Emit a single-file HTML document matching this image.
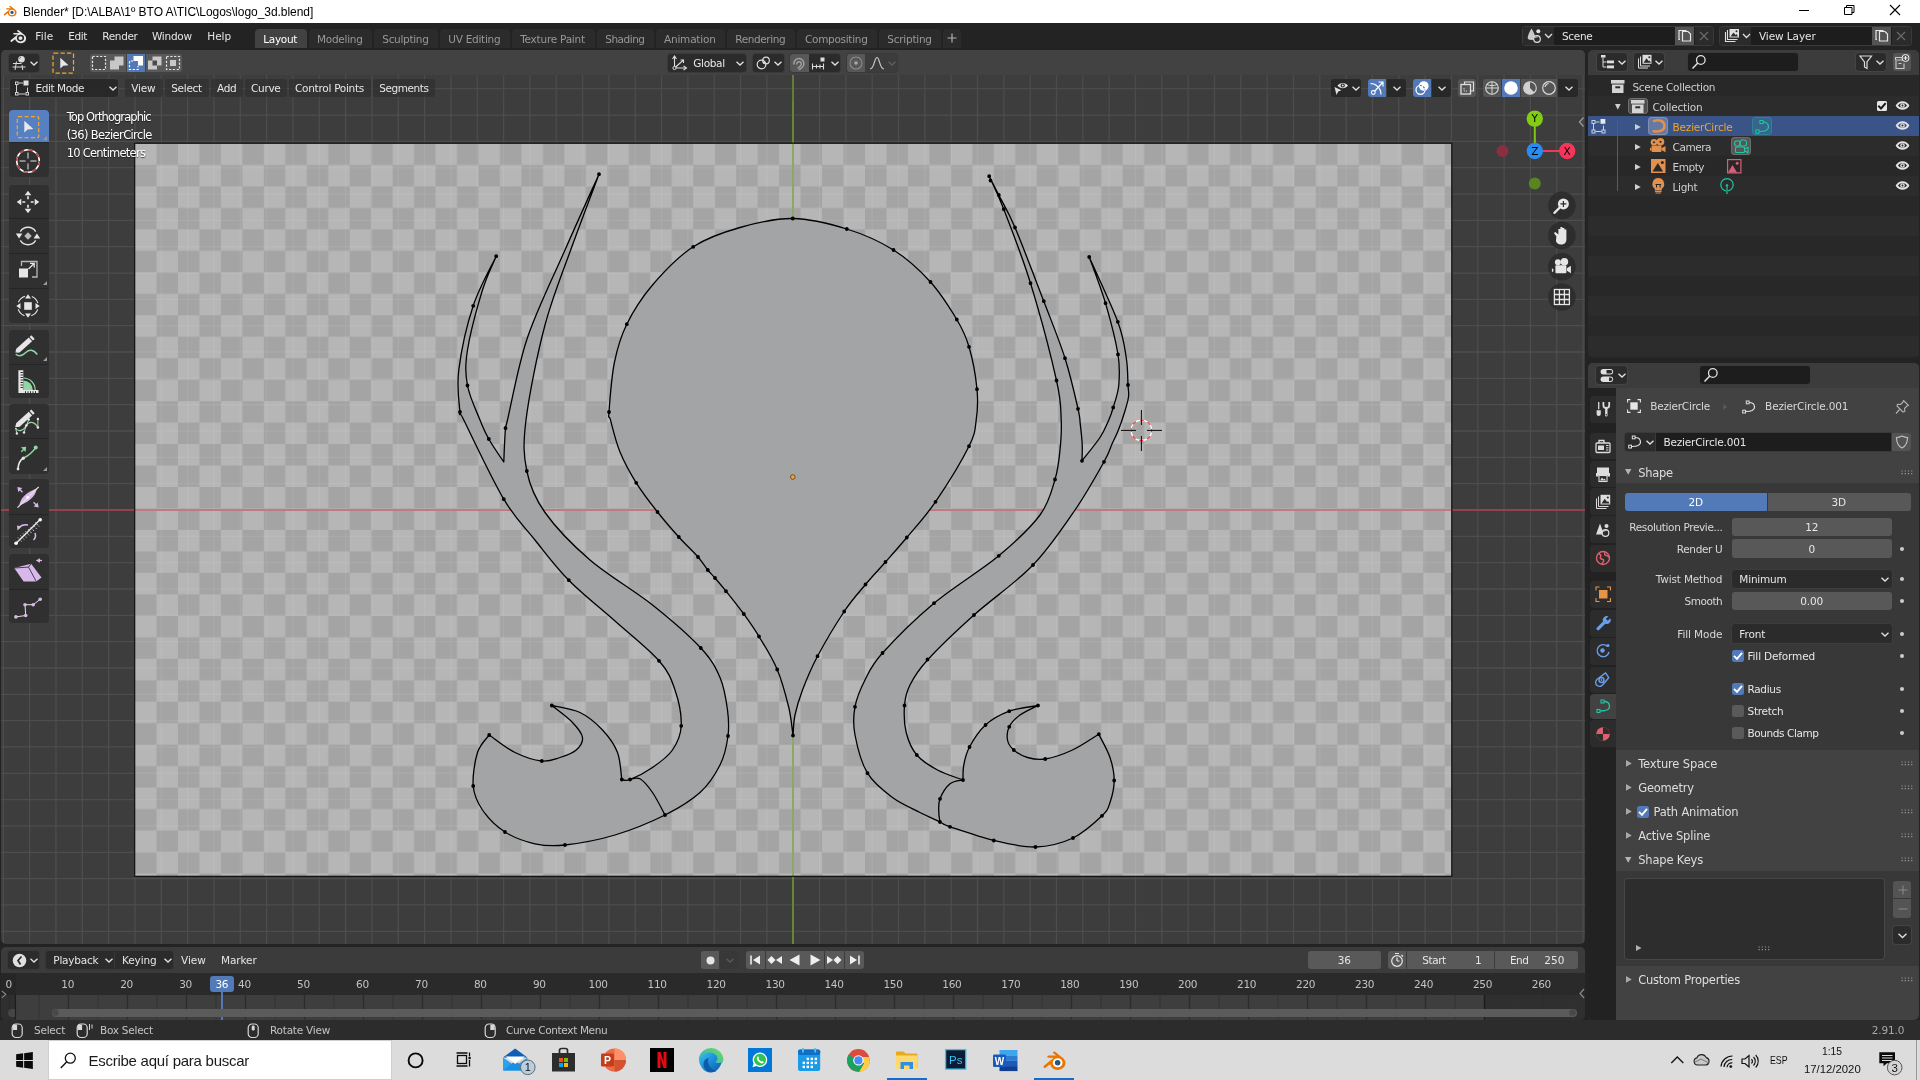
<!DOCTYPE html>
<html><head><meta charset="utf-8"><title>Blender</title>
<style>
html,body{margin:0;padding:0}
body{width:1920px;height:1080px;position:relative;overflow:hidden;background:#232323;font-family:"DejaVu Sans","Liberation Sans",sans-serif;font-size:11px;color:#e0e0e0;-webkit-font-smoothing:antialiased}
.a{position:absolute}
.t{position:absolute;white-space:nowrap;line-height:14px;letter-spacing:-0.35px}
body>div{will-change:transform}
.win{font-family:"Liberation Sans",sans-serif;letter-spacing:0}
.btn{position:absolute;background:#2b2b2b;border-radius:3px;box-shadow:0 0 0 1px #3a3a3a}
.hbtn{position:absolute;background:rgba(40,40,40,.55);border-radius:3px;height:18px;top:3px}
.tab{position:absolute;top:6px;height:19px;background:#2b2b2b;border-radius:4px 4px 0 0;color:#9a9a9a;text-align:center;line-height:20px;font-size:12px;letter-spacing:-0.3px}
.tab.on{background:#424242;color:#fff}
svg{position:absolute;overflow:visible}
.sh{text-shadow:0 1px 1px rgba(0,0,0,.6)}
</style></head>
<body>

<div class="a" style="left:0;top:0;width:1920px;height:23px;background:#fff"></div>
<svg style="left:3.3px;top:4.6px" width="14" height="13" viewBox="0 0 17 16">
 <path d="M1.2 11.2 L8.2 5.6 L4.6 5.6 Q3.6 5.6 3.6 4.8 Q3.6 4 4.6 4 L9.9 4 L7.9 2.4 Q7.3 1.7 7.9 1.2 Q8.5 .8 9.2 1.3 L15 5.9 Q16.9 7.6 16.6 9.9 Q16 13.6 11.6 14.2 Q7.8 14.4 6.2 11.6 L5.6 10.2 L2.4 12.7 Q1.6 13.2 1.1 12.5 Q.7 11.8 1.2 11.2Z" fill="#ea7600"/>
 <ellipse cx="11" cy="9.1" rx="3.5" ry="3.2" fill="#fff"/>
 <ellipse cx="11" cy="9.1" rx="2" ry="1.9" fill="#265787"/>
</svg>
<div class="t win" style="left:23px;top:4.8px;font-size:12px;color:#000;line-height:15px;letter-spacing:-0.04px">Blender* [D:\ALBA\1º BTO A\TIC\Logos\logo_3d.blend]</div>
<svg style="left:1780px;top:0" width="140" height="23" viewBox="0 0 140 23">
 <path d="M19 10.5h10" stroke="#000" stroke-width="1" fill="none"/>
 <path d="M64.5 7.500h7.500v7h-7.500z M66.500 7.500v-2h7.500v7h-2.500" stroke="#000" stroke-width="1" fill="none"/>
 <path d="M110 5l10 10M120 5l-10 10" stroke="#000" stroke-width="1.100" fill="none"/>
</svg>


<div class="a" style="left:0;top:23px;width:1920px;height:27px;background:#232323;font-size:12px">
<svg style="left:9px;top:6px" width="18" height="16" viewBox="0 0 17 16">
 <path d="M1.2 11.2 L8.2 5.6 L4.6 5.6 Q3.6 5.6 3.6 4.8 Q3.6 4 4.6 4 L9.9 4 L7.9 2.4 Q7.3 1.7 7.9 1.2 Q8.5 .8 9.2 1.3 L15 5.9 Q16.9 7.6 16.6 9.9 Q16 13.6 11.6 14.2 Q7.8 14.4 6.2 11.6 L5.6 10.2 L2.4 12.7 Q1.6 13.2 1.1 12.5 Q.7 11.8 1.2 11.2Z" fill="#e6e6e6"/>
 <ellipse cx="11" cy="9.1" rx="3.6" ry="3.3" fill="#232323"/>
 <ellipse cx="11" cy="9.1" rx="2" ry="1.9" fill="#e6e6e6"/>
</svg>
<div class="t" style="top:6.3px;font-size:10.5px;letter-spacing:0.11px;line-height:14px;left:35.3px;color:#e4e4e4;">File</div><div class="t" style="top:6.3px;font-size:10.5px;letter-spacing:-0.41px;line-height:14px;left:68.3px;color:#e4e4e4;">Edit</div><div class="t" style="top:6.3px;font-size:10.5px;letter-spacing:-0.36px;line-height:14px;left:102.3px;color:#e4e4e4;">Render</div><div class="t" style="top:6.3px;font-size:10.5px;letter-spacing:-0.28px;line-height:14px;left:152.0px;color:#e4e4e4;">Window</div><div class="t" style="top:6.3px;font-size:10.5px;letter-spacing:-0.06px;line-height:14px;left:207.3px;color:#e4e4e4;">Help</div>
<div class="tab on" style="left:255px;width:52px"></div><div class="t" style="top:9.2px;font-size:10.5px;letter-spacing:-0.33px;line-height:14px;left:263.3px;color:#fff;">Layout</div><div class="tab" style="left:309px;width:63px"></div><div class="t" style="top:9.2px;font-size:10.5px;letter-spacing:-0.28px;line-height:14px;left:317.0px;color:#989898;">Modeling</div><div class="tab" style="left:374px;width:64px"></div><div class="t" style="top:9.2px;font-size:10.5px;letter-spacing:-0.31px;line-height:14px;left:382.3px;color:#989898;">Sculpting</div><div class="tab" style="left:440px;width:70px"></div><div class="t" style="top:9.2px;font-size:10.5px;letter-spacing:-0.27px;line-height:14px;left:448.3px;color:#989898;">UV Editing</div><div class="tab" style="left:512px;width:83px"></div><div class="t" style="top:9.2px;font-size:10.5px;letter-spacing:-0.24px;line-height:14px;left:520.2px;color:#989898;">Texture Paint</div><div class="tab" style="left:597px;width:57px"></div><div class="t" style="top:9.2px;font-size:10.5px;letter-spacing:-0.47px;line-height:14px;left:605.2px;color:#989898;">Shading</div><div class="tab" style="left:656px;width:69px"></div><div class="t" style="top:9.2px;font-size:10.5px;letter-spacing:-0.21px;line-height:14px;left:664.0px;color:#989898;">Animation</div><div class="tab" style="left:727px;width:68px"></div><div class="t" style="top:9.2px;font-size:10.5px;letter-spacing:-0.38px;line-height:14px;left:735.2px;color:#989898;">Rendering</div><div class="tab" style="left:797px;width:80px"></div><div class="t" style="top:9.2px;font-size:10.5px;letter-spacing:-0.30px;line-height:14px;left:805.0px;color:#989898;">Compositing</div><div class="tab" style="left:879px;width:62px"></div><div class="t" style="top:9.2px;font-size:10.5px;letter-spacing:-0.25px;line-height:14px;left:887.3px;color:#989898;">Scripting</div><div class="tab" style="left:943px;width:18px"></div><svg style="left:947px;top:10px" width="10" height="10"><path d="M5 .5v9M.5 5h9" stroke="#b0b0b0" stroke-width="1.2"/></svg>
<!-- scene selector -->
<div class="a" style="left:1523px;top:4px;width:190px;height:18px;background:#1d1d1d;border-radius:3px;box-shadow:0 0 0 1px #3a3a3a"></div>
<div class="a" style="left:1523px;top:4px;width:31px;height:18px;background:#2b2b2b;border-radius:3px 0 0 3px"></div>
<div class="a" style="left:1675px;top:4px;width:19px;height:18px;background:#545454"></div>
<div class="a" style="left:1695px;top:4px;width:18px;height:18px;background:#2b2b2b;border-radius:0 3px 3px 0"></div>
<svg style="left:1526px;top:5px" width="30" height="16" viewBox="0 0 30 16">
 <path d="M5.500 .5c2 3.500 3.800 7 3.800 9.300c0 1.500-1.500 2.200-3.800 2.200s-3.800-.7-3.800-2.200c0-2.300 1.800-5.800 3.800-9.300z" fill="#c8c8c8"/><circle cx="12.300" cy="3.200" r="2" fill="#e0e0e0"/><circle cx="11" cy="11" r="3.300" fill="#2b2b2b" stroke="#e0e0e0" stroke-width="1.200"/><path d="M9.300 10a2 2 0 0 1 2.500-1" stroke="#e0e0e0" stroke-width=".9" fill="none"/>
 <g transform="translate(19,6)"><path d="M0 0l3.5 3.5L7 0" fill="none" stroke="#e0e0e0" stroke-width="1.3"/></g></svg>
<div class="t" style="top:6.0px;font-size:10.5px;letter-spacing:-0.30px;line-height:14px;left:1562.0px;color:#e4e4e4;">Scene</div>
<svg style="left:1677px;top:5px" width="16" height="16" viewBox="0 0 16 16"><path d="M5.5 3.5h5.5l2.500 2.500v7h-8z M3 11.500h-1v-9h7v1" fill="none" stroke="#e6e6e6" stroke-width="1.2"/></svg>
<svg style="left:1699px;top:8px" width="10" height="10"><path d="M1 1l8 8M9 1l-8 8" stroke="#6a6a6a" stroke-width="1.2"/></svg>
<!-- view layer -->
<div class="a" style="left:1720px;top:4px;width:191px;height:18px;background:#1d1d1d;border-radius:3px;box-shadow:0 0 0 1px #3a3a3a"></div>
<div class="a" style="left:1720px;top:4px;width:31px;height:18px;background:#2b2b2b;border-radius:3px 0 0 3px"></div>
<div class="a" style="left:1872px;top:4px;width:19px;height:18px;background:#545454"></div>
<div class="a" style="left:1892px;top:4px;width:19px;height:18px;background:#2b2b2b;border-radius:0 3px 3px 0"></div>
<svg style="left:1724px;top:5px" width="30" height="16" viewBox="0 0 30 16">
 <path d="M1.500 4v9.500h10" fill="none" stroke="#e0e0e0" stroke-width="1.1"/><path d="M3.500 2v9.500h10" fill="none" stroke="#e0e0e0" stroke-width="1.1"/>
 <rect x="5.500" y="1" width="9.500" height="8.500" fill="#e0e0e0"/><path d="M6.500 8.500l3-4 2 2.500 1-1 1.500 2.500z" fill="#2b2b2b"/><circle cx="12.500" cy="3.300" r="1" fill="#2b2b2b"/>
 <g transform="translate(19,6)"><path d="M0 0l3.5 3.5L7 0" fill="none" stroke="#e0e0e0" stroke-width="1.3"/></g></svg>
<div class="t" style="top:6.0px;font-size:10.5px;letter-spacing:-0.09px;line-height:14px;left:1759.0px;color:#e4e4e4;">View Layer</div>
<svg style="left:1874px;top:5px" width="16" height="16" viewBox="0 0 16 16"><path d="M5.5 3.5h5.5l2.500 2.500v7h-8z M3 11.500h-1v-9h7v1" fill="none" stroke="#e6e6e6" stroke-width="1.2"/></svg>
<svg style="left:1896px;top:8px" width="10" height="10"><path d="M1 1l8 8M9 1l-8 8" stroke="#6a6a6a" stroke-width="1.2"/></svg>
</div>

<div class="a" id="view3d" style="left:1px;top:50px;width:1584px;height:894px;border-radius:5px;overflow:hidden;background:#3d3d3d">
<svg style="left:-1px;top:-50px" width="1586" height="944" viewBox="0 0 1586 944">
<defs><pattern id="ck" x="135.00" y="143.50" width="42.94" height="42.94" patternUnits="userSpaceOnUse"><rect width="42.94" height="42.94" fill="#a4a4a4"/><rect width="21.47" height="21.47" fill="#b6b6b6"/><rect x="21.47" y="21.47" width="21.47" height="21.47" fill="#b6b6b6"/></pattern>
<clipPath id="imgclip"><rect x="135.0" y="143.5" width="1316.5" height="732.5"/></clipPath></defs>
<path d="M3.30 50V944M29.63 50V944M55.96 50V944M82.29 50V944M108.62 50V944M134.95 50V944M161.28 50V944M187.61 50V944M213.94 50V944M240.27 50V944M266.60 50V944M292.93 50V944M319.26 50V944M345.59 50V944M371.92 50V944M398.25 50V944M424.58 50V944M450.91 50V944M477.24 50V944M503.57 50V944M529.90 50V944M556.23 50V944M582.56 50V944M608.89 50V944M635.22 50V944M661.55 50V944M687.88 50V944M714.21 50V944M740.54 50V944M766.87 50V944M819.53 50V944M845.86 50V944M872.19 50V944M898.52 50V944M924.85 50V944M951.18 50V944M977.51 50V944M1003.84 50V944M1030.17 50V944M1056.50 50V944M1082.83 50V944M1109.16 50V944M1135.49 50V944M1161.82 50V944M1188.15 50V944M1214.48 50V944M1240.81 50V944M1267.14 50V944M1293.47 50V944M1319.80 50V944M1346.13 50V944M1372.46 50V944M1398.79 50V944M1425.12 50V944M1451.45 50V944M1477.78 50V944M1504.11 50V944M1530.44 50V944M1556.77 50V944M1583.10 50V944M0 88.72H1586M0 115.05H1586M0 141.38H1586M0 167.71H1586M0 194.04H1586M0 220.37H1586M0 246.70H1586M0 273.03H1586M0 299.36H1586M0 325.69H1586M0 352.02H1586M0 378.35H1586M0 404.68H1586M0 431.01H1586M0 457.34H1586M0 483.67H1586M0 536.33H1586M0 562.66H1586M0 588.99H1586M0 615.32H1586M0 641.65H1586M0 667.98H1586M0 694.31H1586M0 720.64H1586M0 746.97H1586M0 773.30H1586M0 799.63H1586M0 825.96H1586M0 852.29H1586M0 878.62H1586M0 904.95H1586M0 931.28H1586" stroke="#4d4d4d" stroke-width="1.3" fill="none"/>
<path d="M0 510.0H1586" stroke="#96414f" stroke-width="2"/>
<path d="M793.0 75V944" stroke="#648832" stroke-width="2"/>
<rect x="135.0" y="143.5" width="1316.5" height="732.5" fill="url(#ck)"/>
<g clip-path="url(#imgclip)"><path d="M3.30 50V944M29.63 50V944M55.96 50V944M82.29 50V944M108.62 50V944M134.95 50V944M161.28 50V944M187.61 50V944M213.94 50V944M240.27 50V944M266.60 50V944M292.93 50V944M319.26 50V944M345.59 50V944M371.92 50V944M398.25 50V944M424.58 50V944M450.91 50V944M477.24 50V944M503.57 50V944M529.90 50V944M556.23 50V944M582.56 50V944M608.89 50V944M635.22 50V944M661.55 50V944M687.88 50V944M714.21 50V944M740.54 50V944M766.87 50V944M819.53 50V944M845.86 50V944M872.19 50V944M898.52 50V944M924.85 50V944M951.18 50V944M977.51 50V944M1003.84 50V944M1030.17 50V944M1056.50 50V944M1082.83 50V944M1109.16 50V944M1135.49 50V944M1161.82 50V944M1188.15 50V944M1214.48 50V944M1240.81 50V944M1267.14 50V944M1293.47 50V944M1319.80 50V944M1346.13 50V944M1372.46 50V944M1398.79 50V944M1425.12 50V944M1451.45 50V944M1477.78 50V944M1504.11 50V944M1530.44 50V944M1556.77 50V944M1583.10 50V944M0 88.72H1586M0 115.05H1586M0 141.38H1586M0 167.71H1586M0 194.04H1586M0 220.37H1586M0 246.70H1586M0 273.03H1586M0 299.36H1586M0 325.69H1586M0 352.02H1586M0 378.35H1586M0 404.68H1586M0 431.01H1586M0 457.34H1586M0 483.67H1586M0 536.33H1586M0 562.66H1586M0 588.99H1586M0 615.32H1586M0 641.65H1586M0 667.98H1586M0 694.31H1586M0 720.64H1586M0 746.97H1586M0 773.30H1586M0 799.63H1586M0 825.96H1586M0 852.29H1586M0 878.62H1586M0 904.95H1586M0 931.28H1586" stroke="rgba(255,255,255,.07)" stroke-width="1.4" fill="none"/>
<path d="M0 510.0H1586" stroke="#c07a82" stroke-width="2"/>
<path d="M793.0 75V944" stroke="#8aa866" stroke-width="2"/></g>
<rect x="134.7" y="143.2" width="1317.1" height="733.1" fill="none" stroke="#111" stroke-width="1.2"/>
<g fill="#a3a4a6" stroke="#000" stroke-width="1.3" stroke-linejoin="round">
<path d="M793.0 735.5C792.3 730.8 791.4 718.5 788.8 707.5C786.1 696.5 782.2 681.3 777.2 669.5C772.3 657.7 764.6 645.8 759.0 636.5C753.4 627.2 749.2 621.5 743.8 614.0C738.2 606.5 730.8 597.2 726.0 591.2C721.2 585.2 718.0 581.5 715.0 578.0C712.0 574.5 710.6 573.5 707.8 570.0C704.9 566.5 702.8 562.5 698.0 557.0C693.2 551.5 685.5 544.5 678.8 537.0C672.0 529.5 664.6 521.0 657.5 512.0C650.4 503.0 642.5 492.8 636.2 482.8C630.0 472.8 624.3 462.5 620.0 452.0C615.7 441.5 612.3 426.7 610.5 420.0C608.7 413.3 608.3 421.7 609.0 412.0C609.7 402.3 611.5 376.6 614.5 362.0C617.5 347.4 620.4 337.1 626.8 324.2C633.1 311.4 641.4 297.9 652.5 285.0C663.6 272.1 678.7 256.3 693.2 246.8C707.8 237.2 723.4 232.2 740.0 227.5C756.6 222.8 775.0 218.2 792.8 218.5C810.5 218.8 830.0 223.8 846.8 229.0C863.5 234.2 879.5 241.2 893.5 250.0C907.5 258.8 920.0 270.4 930.5 282.0C941.0 293.6 950.3 308.7 956.8 319.5C963.2 330.3 965.6 335.1 969.0 346.8C972.4 358.4 975.8 377.0 977.0 389.2C978.2 401.5 977.6 410.5 976.2 420.0C974.9 429.5 975.8 432.6 969.0 446.2C962.2 459.9 945.9 486.5 935.5 501.8C925.1 517.0 915.1 527.5 906.8 537.5C898.4 547.5 892.4 554.2 885.5 562.0C878.6 569.8 872.4 576.2 865.5 584.5C858.6 592.8 852.2 599.5 844.2 611.5C836.2 623.5 824.5 643.2 817.5 656.2C810.5 669.3 806.2 680.2 802.5 690.0C798.8 699.8 796.6 707.4 795.0 715.0C793.4 722.6 793.3 732.1 793.0 735.5Z"/>
<path d="M599.0 174.2C594.6 186.0 581.5 219.9 572.5 245.0C563.5 270.1 552.8 295.8 545.0 325.0C537.2 354.2 529.0 395.7 526.0 420.0C523.0 444.3 523.6 455.6 526.8 471.0C529.9 486.4 534.5 497.7 545.0 512.5C555.5 527.3 572.1 544.6 590.0 560.0C607.9 575.4 634.0 590.3 652.5 605.0C671.0 619.7 689.5 635.9 700.8 648.0C712.0 660.1 715.5 667.2 720.0 677.5C724.5 687.8 726.2 700.2 727.5 710.0C728.8 719.8 729.2 726.8 728.0 736.0C726.8 745.2 724.7 755.6 720.0 765.0C715.3 774.4 709.2 784.2 700.0 792.5C690.8 800.8 679.2 807.9 665.0 815.0C650.8 822.1 631.7 830.0 615.0 835.0C598.3 840.0 578.3 843.5 565.0 845.0C551.7 846.5 545.0 845.9 535.0 843.8C525.0 841.6 513.8 837.6 505.0 832.0C496.2 826.4 487.8 817.7 482.5 810.0C477.2 802.3 474.1 795.6 473.2 786.0C472.4 776.4 474.8 761.0 477.5 752.5C480.2 744.0 487.3 737.9 489.2 735.0C493.5 737.9 506.2 748.2 515.0 752.5C523.8 756.8 534.2 760.2 541.8 761.0C549.2 761.8 554.2 759.3 560.0 757.5C565.8 755.7 572.5 753.3 576.2 750.0C580.0 746.7 583.1 742.1 582.5 737.5C581.9 732.9 577.6 727.8 572.5 722.5C567.4 717.2 555.2 708.3 551.8 705.5C556.5 706.7 571.5 708.4 580.0 712.5C588.5 716.6 596.2 723.3 602.5 730.0C608.8 736.7 614.3 744.2 617.5 752.5C620.7 760.8 621.0 775.0 621.8 779.5C623.1 779.5 624.9 781.5 630.0 779.5C635.1 777.5 645.4 772.4 652.5 767.5C659.6 762.6 667.7 757.0 672.5 750.0C677.3 743.0 680.8 735.8 681.2 725.8C681.7 715.8 678.7 700.8 675.0 690.0C671.3 679.2 669.0 672.2 659.0 660.8C649.0 649.2 630.0 634.4 615.0 621.0C600.0 607.6 582.1 593.8 568.8 580.2C555.4 566.8 545.8 553.5 535.0 540.0C524.2 526.5 515.6 519.2 503.8 499.2C491.9 479.2 471.0 434.5 463.8 420.0C456.5 405.5 460.8 420.3 460.0 412.0C459.2 403.7 456.5 387.7 458.8 370.0C461.0 352.3 467.0 324.7 473.2 305.8C479.5 286.8 492.4 264.5 496.2 256.2C494.0 261.9 487.3 274.4 482.5 290.0C477.7 305.6 470.0 334.1 467.5 350.0C465.0 365.9 465.4 373.8 467.5 385.5C469.6 397.2 476.5 411.1 480.0 420.0C483.5 428.9 484.8 432.0 488.8 439.0C492.7 446.0 501.2 458.2 503.8 462.0C504.0 456.4 504.9 435.2 505.5 428.2C506.1 421.2 503.8 435.1 507.5 420.0C511.2 404.9 517.9 365.8 527.5 337.5C537.1 309.2 553.1 277.2 565.0 250.0C576.9 222.8 593.3 186.9 599.0 174.2Z"/>
<path d="M989.2 176.2C990.8 179.4 994.5 186.5 998.8 195.0C1003.0 203.5 1007.5 209.8 1015.0 227.5C1022.5 245.2 1035.4 279.5 1043.8 301.2C1052.1 323.0 1059.3 340.3 1065.0 358.2C1070.7 376.2 1075.5 397.7 1078.0 408.8C1080.5 419.8 1079.6 418.5 1080.3 424.4C1081.0 430.3 1081.9 437.9 1082.2 444.0C1082.5 450.1 1082.0 458.0 1082.0 460.8C1085.0 456.9 1095.5 444.3 1100.0 437.5C1104.5 430.7 1106.5 425.0 1108.8 420.0C1111.0 415.0 1111.6 413.3 1113.2 407.5C1114.9 401.7 1118.0 393.8 1118.8 385.0C1119.5 376.2 1120.2 368.1 1118.0 354.5C1115.8 340.9 1110.3 319.5 1105.5 303.2C1100.7 287.0 1092.0 264.7 1089.2 257.0C1094.0 267.8 1111.6 305.0 1117.8 321.8C1123.9 338.5 1124.5 347.0 1126.2 357.5C1128.0 368.0 1127.6 378.4 1128.0 385.0C1128.4 391.6 1129.1 392.4 1128.5 397.0C1127.9 401.6 1126.2 407.0 1124.4 412.7C1122.7 418.4 1120.1 425.8 1118.0 431.0C1115.9 436.2 1114.3 438.9 1112.0 444.0C1109.7 449.1 1110.2 450.8 1104.0 461.8C1097.8 472.8 1086.8 492.8 1075.0 510.0C1063.2 527.2 1049.8 547.5 1033.0 565.0C1016.2 582.5 991.6 599.2 974.0 615.0C956.4 630.8 938.2 648.3 927.5 660.0C916.8 671.7 913.8 677.4 910.0 685.0C906.2 692.6 905.1 697.6 904.5 705.5C903.9 713.4 904.2 724.2 906.2 732.5C908.3 740.8 911.5 748.8 916.8 755.0C922.0 761.2 929.8 765.8 937.5 770.0C945.2 774.2 958.8 778.3 963.0 780.0C963.1 777.5 962.7 770.5 963.8 765.0C964.8 759.5 965.9 753.7 969.5 747.0C973.1 740.3 978.9 731.0 985.5 725.0C992.1 719.0 1000.5 714.5 1009.2 711.2C1018.0 708.0 1033.2 706.5 1038.0 705.5C1035.0 707.1 1024.8 711.5 1020.0 715.0C1015.2 718.5 1011.3 722.6 1009.2 726.8C1007.2 730.9 1006.8 736.1 1007.5 740.0C1008.2 743.9 1010.4 747.1 1013.8 750.0C1017.1 752.9 1022.2 756.0 1027.5 757.5C1032.8 759.0 1037.8 760.2 1045.2 759.0C1052.8 757.8 1063.6 754.1 1072.5 750.0C1081.4 745.9 1094.4 736.9 1098.8 734.2C1100.6 738.1 1107.4 749.8 1110.0 757.5C1112.6 765.2 1114.2 773.0 1114.2 780.5C1114.2 788.0 1112.0 796.6 1110.0 802.5C1108.0 808.4 1108.2 809.8 1102.0 815.8C1095.8 821.7 1084.1 832.8 1073.0 838.0C1061.9 843.2 1048.7 846.6 1035.5 847.0C1022.3 847.4 1008.0 843.9 993.8 840.5C979.5 837.1 959.0 829.8 950.0 826.8C941.0 823.7 945.0 824.4 940.0 822.0C935.0 819.6 927.9 816.6 920.0 812.5C912.1 808.4 901.2 804.0 892.5 797.5C883.8 791.0 873.8 783.7 867.5 773.2C861.2 762.8 857.1 746.1 855.0 735.0C852.9 723.9 853.3 715.9 855.0 706.8C856.7 697.6 860.4 689.0 865.0 680.0C869.6 671.0 871.0 665.8 882.5 653.0C894.0 640.2 914.6 619.5 934.0 603.2C953.4 587.0 981.1 570.5 998.8 555.8C1016.4 541.0 1030.6 527.7 1040.0 515.0C1049.4 502.3 1051.7 490.3 1055.0 479.5C1058.3 468.7 1059.0 459.9 1060.0 450.0C1061.0 440.1 1061.8 431.6 1061.2 420.0C1060.7 408.4 1061.6 403.3 1056.5 380.5C1051.4 357.7 1039.3 311.8 1030.5 283.2C1021.7 254.7 1010.6 227.1 1003.8 209.2C996.9 191.4 991.7 181.8 989.2 176.2Z"/>
<path d="M630.0 779.5C631.7 779.4 636.2 776.6 640.0 778.8C643.8 780.9 648.3 786.5 652.5 792.5C656.7 798.5 662.9 811.2 665.0 815.0" fill="none"/>
<path d="M963.0 780.0C960.8 780.6 953.8 780.6 950.0 783.8C946.2 786.9 941.9 794.0 940.0 798.8C938.1 803.5 938.8 808.6 938.8 812.5C938.8 816.4 939.8 820.4 940.0 822.0" fill="none"/>
</g>
<path d="M792.8 218.5h.01M846.8 229.0h.01M893.5 250.0h.01M930.5 282.0h.01M956.8 319.5h.01M969.0 346.8h.01M977.0 389.2h.01M969.0 446.2h.01M935.5 501.8h.01M906.8 537.5h.01M885.5 562.0h.01M865.5 584.5h.01M844.2 611.5h.01M817.5 656.2h.01M793.0 735.5h.01M777.2 669.5h.01M759.0 636.5h.01M743.8 614.0h.01M726.0 591.2h.01M715.0 578.0h.01M707.8 570.0h.01M698.0 557.0h.01M678.8 537.0h.01M657.5 512.0h.01M636.2 482.8h.01M609.0 412.0h.01M626.8 324.2h.01M693.2 246.8h.01M599.0 174.2h.01M496.2 256.2h.01M473.2 305.8h.01M467.5 385.5h.01M460.0 412.0h.01M488.8 439.0h.01M505.5 428.2h.01M526.8 471.0h.01M503.8 499.2h.01M568.8 580.2h.01M659.0 660.8h.01M700.8 648.0h.01M681.2 725.8h.01M728.0 736.0h.01M621.8 779.5h.01M630.0 779.5h.01M665.0 815.0h.01M551.8 705.5h.01M541.8 761.0h.01M489.2 735.0h.01M473.2 786.0h.01M505.0 832.0h.01M565.0 845.0h.01M989.2 176.2h.01M990.5 180.5h.01M998.8 195.0h.01M1003.8 209.2h.01M1015.0 227.5h.01M1030.5 283.2h.01M1043.8 301.2h.01M1065.0 358.2h.01M1056.5 380.5h.01M1078.0 408.8h.01M1089.2 257.0h.01M1105.5 303.2h.01M1117.8 321.8h.01M1118.0 354.5h.01M1128.0 385.0h.01M1113.2 407.5h.01M1082.0 460.8h.01M1104.0 461.8h.01M1055.0 479.5h.01M998.8 555.8h.01M1033.0 565.0h.01M934.0 603.2h.01M974.0 615.0h.01M882.5 653.0h.01M927.5 659.5h.01M855.0 706.8h.01M904.5 705.5h.01M916.8 755.0h.01M867.5 773.2h.01M963.0 780.0h.01M940.0 798.8h.01M940.0 822.0h.01M950.0 826.8h.01M969.5 747.0h.01M985.5 725.0h.01M1009.2 711.2h.01M1038.0 705.5h.01M1009.2 726.8h.01M1013.8 750.0h.01M1045.2 759.0h.01M1098.8 734.2h.01M1114.2 780.5h.01M1102.0 815.8h.01M1073.0 838.0h.01M1035.5 847.0h.01M993.8 840.5h.01" stroke="#000" stroke-width="3.8" stroke-linecap="round" fill="none"/>
<circle cx="792.8" cy="477" r="2.3" fill="#f5a33a" stroke="#5a3a10" stroke-width=".8"/>
<g fill="none"><circle cx="1141.4" cy="430.4" r="10.3" stroke="#fff" stroke-width="1.2"/><circle cx="1141.4" cy="430.4" r="10.3" stroke="#f0383c" stroke-width="1.2" stroke-dasharray="4.045 4.045" stroke-dashoffset="2"/><path d="M1141.400 410v15M1141.400 436v15M1121 430.400h15M1147 430.400h15" stroke="#0a0a0a" stroke-width="1"/></g>
</svg>
<div class="a" style="left:0.0px;top:0.0px;width:1584.0px;height:25.0px;background:#424242;"></div>
<div class="a" style="left:8.0px;top:4.0px;width:30.0px;height:18.0px;background:#2b2b2b;border-radius:3px;box-shadow:0 0 0 1px #3a3a3a;"></div>
<svg style="left:11.0px;top:5.0px" width="16" height="16"><path d="M1 8.500h8.500M0.500 12h13M4.500 6.500l-1.500 8.500M10 10l.7 5" stroke="#dcdcdc" stroke-width="1" fill="none"/><circle cx="9.500" cy="4.300" r="3.300" fill="#dcdcdc"/><path d="M7.300 3.800a2.200 2.200 0 0 1 1.700-1.700" stroke="#555" stroke-width=".8" fill="none"/></svg>
<svg style="left:29.0px;top:11.0px" width="8" height="6"><path d="M.5 .7l3.5 3.3l3.5 -3.3" fill="none" stroke="#e0e0e0" stroke-width="1.3"/></svg>
<svg style="left:51.0px;top:2.0px" width="23" height="22"><rect x="1" y="1" width="20.500" height="20" fill="none" stroke="#f5a623" stroke-width="1.250" stroke-dasharray="4.300 2.200" rx="1"/><path d="M8.300 5.800v10.600l3-2.600 5.200-.6z" fill="#e8e8e8"/></svg>
<div class="a" style="left:88.6px;top:4.0px;width:18.1px;height:18.0px;background:#595959;border-radius:3px 0 0 3px;"></div>
<div class="a" style="left:107.3px;top:4.0px;width:18.1px;height:18.0px;background:#595959;"></div>
<div class="a" style="left:126.0px;top:4.0px;width:18.1px;height:18.0px;background:#5279b8;"></div>
<div class="a" style="left:144.7px;top:4.0px;width:18.1px;height:18.0px;background:#595959;"></div>
<div class="a" style="left:163.4px;top:4.0px;width:18.0px;height:18.0px;background:#595959;border-radius:0 3px 3px 0;"></div>
<svg style="left:88.6px;top:4.0px" width="18" height="18"><rect x="2.500" y="2.500" width="13" height="13" fill="#4a4a4a" stroke="#e6e6e6" stroke-width="1.200" stroke-dasharray="2.200 1.600"/></svg>
<svg style="left:107.3px;top:4.0px" width="18" height="18"><path d="M6.500 2.500h9v9h-4.500v4h-9v-9h4.500z" fill="#c8c8c8"/></svg>
<svg style="left:126.0px;top:4.0px" width="18" height="18"><path d="M6.500 2h9.500v9.500h-5v-4.500h-4.500z" fill="#fff"/><path d="M6 7h-3.500v8.500h8.500v-3.500" fill="none" stroke="#fff" stroke-width="1.200" stroke-dasharray="2.200 1.600"/></svg>
<svg style="left:144.7px;top:4.0px" width="18" height="18"><path d="M6.500 2.500h9v9h-4.500v4h-9v-9h4.500z" fill="#c8c8c8"/><rect x="6.500" y="6.500" width="4.500" height="5" fill="#4a4a4a"/></svg>
<svg style="left:163.4px;top:4.0px" width="18" height="18"><rect x="2.500" y="2.500" width="13" height="13" fill="none" stroke="#e6e6e6" stroke-width="1.200" stroke-dasharray="2.200 1.600"/><rect x="6" y="6" width="6" height="6" fill="#c8c8c8"/></svg>
<div class="a" style="left:667.0px;top:4.0px;width:78.0px;height:18.0px;background:#2b2b2b;border-radius:3px;box-shadow:0 0 0 1px #3a3a3a;"></div>
<svg style="left:670.0px;top:5.0px" width="18" height="16"><path d="M3.500 1.500v11.500h11.500M3.500 13l9-8" stroke="#dcdcdc" stroke-width="1.100" fill="none"/><path d="M1.500 4l2-3 2 3M12.500 11l3 2-3 2M9.500 5h3v3" stroke="#dcdcdc" stroke-width="1.100" fill="none"/><circle cx="3.500" cy="13" r="1.600" fill="#2b2b2b" stroke="#dcdcdc"/></svg>
<div class="t" style="top:6.3px;font-size:10.5px;letter-spacing:-0.33px;line-height:14px;left:692.3px;color:#e6e6e6;">Global</div>
<svg style="left:735.0px;top:11.0px" width="8" height="6"><path d="M.5 .7l3.5 3.3l3.5 -3.3" fill="none" stroke="#e0e0e0" stroke-width="1.3"/></svg>
<div class="a" style="left:752.0px;top:4.0px;width:30.5px;height:18.0px;background:#2b2b2b;border-radius:3px;box-shadow:0 0 0 1px #3a3a3a;"></div>
<svg style="left:755.0px;top:5.0px" width="16" height="16"><circle cx="5.500" cy="9.500" r="4.300" fill="none" stroke="#dcdcdc" stroke-width="1.200"/><circle cx="10" cy="5.500" r="3.300" fill="none" stroke="#dcdcdc" stroke-width="1.200"/><circle cx="8" cy="7.500" r="1" fill="#dcdcdc"/></svg>
<svg style="left:772.5px;top:11.0px" width="8" height="6"><path d="M.5 .7l3.5 3.3l3.5 -3.3" fill="none" stroke="#e0e0e0" stroke-width="1.3"/></svg>
<div class="a" style="left:788.6px;top:4.0px;width:50.4px;height:18.0px;background:#2b2b2b;border-radius:3px;box-shadow:0 0 0 1px #3a3a3a;"></div>
<div class="a" style="left:788.6px;top:4.0px;width:19.1px;height:18.0px;background:#585858;border-radius:3px 0 0 3px;"></div>
<svg style="left:790.0px;top:5.0px" width="16" height="16"><path d="M3 9.500a5 5 0 1 1 8.500 2.500l-3.500 3M5.800 9.500a2.300 2.300 0 1 1 3.800 1.200l-3 2.800" fill="none" stroke="#a0a0a0" stroke-width="1.500"/></svg>
<svg style="left:810.0px;top:5.0px" width="16" height="16"><path d="M1 11.500h12M1.500 8.500v6M5.500 9.500v4M9 9.500v4M12.500 8.500v6" stroke="#dcdcdc" stroke-width="1.100" fill="none"/><rect x="9.500" y="2.500" width="4" height="4" fill="#dcdcdc"/></svg>
<svg style="left:829.5px;top:11.0px" width="8" height="6"><path d="M.5 .7l3.5 3.3l3.5 -3.3" fill="none" stroke="#e0e0e0" stroke-width="1.3"/></svg>
<div class="a" style="left:846.0px;top:4.0px;width:50.0px;height:18.0px;background:#3c3c3c;border-radius:3px;box-shadow:0 0 0 1px #3a3a3a;"></div>
<div class="a" style="left:846.0px;top:4.0px;width:18.3px;height:18.0px;background:#585858;border-radius:3px 0 0 3px;"></div>
<svg style="left:847.0px;top:5.0px" width="16" height="16"><circle cx="8" cy="8" r="6" fill="none" stroke="#8a8a8a" stroke-width="1.100"/><circle cx="8" cy="8" r="1.800" fill="#a8a8a8"/></svg>
<svg style="left:868.0px;top:5.0px" width="18" height="16"><path d="M1 14c4.500 0 4.300-11.500 7-11.500s2.500 11.500 7 11.500" fill="none" stroke="#c8c8c8" stroke-width="1.200"/></svg>
<svg style="left:886.5px;top:11.0px" width="8" height="6"><path d="M.5 .7l3.5 3.3l3.5 -3.3" fill="none" stroke="#5e5e5e" stroke-width="1.3"/></svg>
<div class="a" style="left:0.0px;top:25.0px;width:1584.0px;height:26.0px;background:rgba(66,66,66,.12);"></div>
<div class="a" style="left:9.4px;top:29.3px;width:107.6px;height:17.7px;background:rgba(38,38,38,.92);border-radius:3px;box-shadow:0 0 0 1px rgba(70,70,70,.6);"></div>
<svg style="left:12.5px;top:30.0px" width="16" height="16"><path d="M2.500 4.500v8M4.500 14h7M13.500 12.500v-5M4.500 3h4.500" stroke="#d0d0d0" stroke-width="1" fill="none"/><rect x="1.500" y="2" width="2.500" height="2.500" fill="none" stroke="#d0d0d0"/><rect x="1.500" y="12.500" width="2.500" height="2.500" fill="none" stroke="#d0d0d0"/><rect x="12" y="12.500" width="2.500" height="2.500" fill="none" stroke="#d0d0d0"/><rect x="9.500" y=".5" width="5" height="5" fill="#e0e0e0"/></svg>
<div class="t" style="top:30.6px;font-size:10.5px;letter-spacing:-0.39px;line-height:14px;left:34.4px;color:#e6e6e6;">Edit Mode</div>
<svg style="left:107.5px;top:36.3px" width="8" height="6"><path d="M.5 .7l3.5 3.3l3.5 -3.3" fill="none" stroke="#e0e0e0" stroke-width="1.3"/></svg>
<div class="a" style="left:124.3px;top:29.3px;width:37.3px;height:17.7px;background:rgba(48,48,48,.75);border-radius:3px;"></div>
<div class="t" style="top:30.6px;font-size:10.5px;letter-spacing:-0.18px;line-height:14px;left:130.3px;color:#e6e6e6;">View</div>
<div class="a" style="left:164.0px;top:29.3px;width:43.7px;height:17.7px;background:rgba(48,48,48,.75);border-radius:3px;"></div>
<div class="t" style="top:30.6px;font-size:10.5px;letter-spacing:-0.27px;line-height:14px;left:170.2px;color:#e6e6e6;">Select</div>
<div class="a" style="left:209.7px;top:29.3px;width:32.6px;height:17.7px;background:rgba(48,48,48,.75);border-radius:3px;"></div>
<div class="t" style="top:30.6px;font-size:10.5px;letter-spacing:-0.34px;line-height:14px;left:216.0px;color:#e6e6e6;">Add</div>
<div class="a" style="left:244.0px;top:29.3px;width:42.0px;height:17.7px;background:rgba(48,48,48,.75);border-radius:3px;"></div>
<div class="t" style="top:30.6px;font-size:10.5px;letter-spacing:-0.30px;line-height:14px;left:250.0px;color:#e6e6e6;">Curve</div>
<div class="a" style="left:287.7px;top:29.3px;width:82.3px;height:17.7px;background:rgba(48,48,48,.75);border-radius:3px;"></div>
<div class="t" style="top:30.6px;font-size:10.5px;letter-spacing:-0.27px;line-height:14px;left:294.0px;color:#e6e6e6;">Control Points</div>
<div class="a" style="left:371.7px;top:29.3px;width:62.3px;height:17.7px;background:rgba(48,48,48,.75);border-radius:3px;"></div>
<div class="t" style="top:30.6px;font-size:10.5px;letter-spacing:-0.44px;line-height:14px;left:378.3px;color:#e6e6e6;">Segments</div>
<div class="a" style="left:1330.2px;top:29.0px;width:29.8px;height:18.0px;background:rgba(38,38,38,.92);border-radius:3px;"></div>
<svg style="left:1332.0px;top:30.0px" width="18" height="16"><path d="M4.500 5.500c2.500-3.500 8-3.500 10.500 0c-2.500 3.500-8 3.500-10.500 0z" fill="#e0e0e0"/><circle cx="9.700" cy="5.500" r="2.100" fill="#262626"/><circle cx="9.700" cy="5.500" r="1" fill="#e0e0e0"/><path d="M1.500 7l7 3.300-3.300 1.200-1.700 3.500z" fill="#e0e0e0"/></svg>
<svg style="left:1350.5px;top:36.0px" width="8" height="6"><path d="M.5 .7l3.5 3.3l3.5 -3.3" fill="none" stroke="#e0e0e0" stroke-width="1.3"/></svg>
<div class="a" style="left:1367.0px;top:29.0px;width:18.3px;height:18.0px;background:#5279b8;border-radius:3px 0 0 3px;"></div>
<div class="a" style="left:1385.8px;top:29.0px;width:19.2px;height:18.0px;background:rgba(38,38,38,.92);border-radius:0 3px 3px 0;"></div>
<svg style="left:1368.0px;top:30.0px" width="16" height="16"><path d="M1.500 3.500c5.500 0 10.500 4.500 10.500 11" fill="none" stroke="#fff" stroke-width="1.200"/><path d="M5 12l8.500-9.500M9.500 2h4.500v4.500" fill="none" stroke="#fff" stroke-width="1.200"/><circle cx="4.300" cy="12.500" r="1.900" fill="#5279b8" stroke="#fff" stroke-width="1.100"/></svg>
<svg style="left:1391.5px;top:36.0px" width="8" height="6"><path d="M.5 .7l3.5 3.3l3.5 -3.3" fill="none" stroke="#e0e0e0" stroke-width="1.3"/></svg>
<div class="a" style="left:1411.8px;top:29.0px;width:18.4px;height:18.0px;background:#5279b8;border-radius:3px 0 0 3px;"></div>
<div class="a" style="left:1430.7px;top:29.0px;width:19.1px;height:18.0px;background:rgba(38,38,38,.92);border-radius:0 3px 3px 0;"></div>
<svg style="left:1413.0px;top:30.0px" width="16" height="16"><circle cx="9.800" cy="6" r="4.800" fill="#fff"/><circle cx="6.500" cy="9.800" r="4.500" fill="none" stroke="#fff" stroke-width="1.300"/><path d="M6 5.500a4.500 4.500 0 0 1 4.800 4.800" stroke="#5279b8" stroke-width="1.200" fill="none" stroke-dasharray="2 1.300"/></svg>
<svg style="left:1436.5px;top:36.0px" width="8" height="6"><path d="M.5 .7l3.5 3.3l3.5 -3.3" fill="none" stroke="#e0e0e0" stroke-width="1.3"/></svg>
<div class="a" style="left:1457.3px;top:29.0px;width:17.7px;height:18.0px;background:#555;border-radius:3px;"></div>
<svg style="left:1458.3px;top:30.0px" width="16" height="16"><path d="M5.500 4.500v-2.500h9v9h-2.500" fill="none" stroke="#e0e0e0" stroke-width="1.200"/><rect x="2" y="4.500" width="9.500" height="9.500" fill="none" stroke="#e0e0e0" stroke-width="1.300"/><path d="M5 8v3h3" fill="none" stroke="#e0e0e0" stroke-width="1" stroke-dasharray="1.300 1.200"/></svg>
<div class="a" style="left:1482.0px;top:29.0px;width:18.3px;height:18.0px;background:#555;border-radius:3px 0 0 3px;"></div>
<div class="a" style="left:1500.8px;top:29.0px;width:18.2px;height:18.0px;background:#5279b8;"></div>
<div class="a" style="left:1519.5px;top:29.0px;width:18.3px;height:18.0px;background:#555;"></div>
<div class="a" style="left:1538.3px;top:29.0px;width:18.2px;height:18.0px;background:#555;"></div>
<div class="a" style="left:1557.0px;top:29.0px;width:19.5px;height:18.0px;background:rgba(38,38,38,.92);border-radius:0 3px 3px 0;"></div>
<svg style="left:1483.0px;top:30.0px" width="16" height="16"><circle cx="8" cy="8" r="6.300" fill="none" stroke="#d8d8d8" stroke-width="1.100"/><path d="M1.700 8h12.600M8 1.700v12.600M3 4.500c3 1.500 7 1.500 10 0" fill="none" stroke="#d8d8d8" stroke-width="1"/></svg>
<svg style="left:1502.0px;top:30.0px" width="16" height="16"><circle cx="8" cy="8" r="6.800" fill="#fff"/></svg>
<svg style="left:1521.0px;top:30.0px" width="16" height="16"><circle cx="8" cy="8" r="6.300" fill="none" stroke="#d8d8d8" stroke-width="1.100"/><path d="M8 8v-6.300a6.300 6.300 0 0 0 0 12.600a6.300 6.300 0 0 0 4.500-1.800z" fill="#d0d0d0"/></svg>
<svg style="left:1539.5px;top:30.0px" width="16" height="16"><circle cx="8" cy="8" r="6.300" fill="none" stroke="#d8d8d8" stroke-width="1.200"/><path d="M4 7a4.500 4.500 0 0 1 3.500-3.500" fill="none" stroke="#d8d8d8" stroke-width="1.200"/><path d="M11 13.500l2.500-3" stroke="#d8d8d8" stroke-width="1" stroke-dasharray="1 1"/></svg>
<svg style="left:1563.5px;top:36.0px" width="8" height="6"><path d="M.5 .7l3.5 3.3l3.5 -3.3" fill="none" stroke="#e0e0e0" stroke-width="1.3"/></svg>
<div class="t sh" style="top:60.4px;font-size:11.5px;letter-spacing:-0.93px;line-height:14px;left:65.7px;color:#fff;">Top Orthographic</div>
<div class="t sh" style="top:78.4px;font-size:11.5px;letter-spacing:-0.62px;line-height:14px;left:65.7px;color:#fff;">(36) BezierCircle</div>
<div class="t sh" style="top:96.4px;font-size:11.5px;letter-spacing:-0.75px;line-height:14px;left:65.7px;color:#fff;">10 Centimeters</div>
<div class="a" style="left:8.3px;top:60.0px;width:39.4px;height:67.0px;background:rgba(47,47,47,.97);border-radius:4px;"></div>
<div class="a" style="left:8.3px;top:60.0px;width:39.4px;height:32.3px;background:#5680c2;border-radius:4px 4px 0 0;"></div>
<svg style="left:12.0px;top:61.8px" width="30" height="30" viewBox="0 0 30 30"><rect x="4.300" y="4.500" width="21.400" height="21" fill="none" stroke="#f5a623" stroke-width="1.250" stroke-dasharray="4 2.300" rx="1"/><path d="M11.300 8.800v11.600l3.300-2.900 5.700-.6z" fill="#e8e8e8"/></svg>
<svg style="left:42.3px;top:85.9px" width="4" height="4"><path d="M4 0v4h-4z" fill="#9a9a9a"/></svg>
<div class="a" style="left:8.3px;top:91.9px;width:39.4px;height:0.8px;background:rgba(30,30,30,.55);"></div>
<svg style="left:12.0px;top:95.5px" width="30" height="30" viewBox="0 0 30 30"><circle cx="15" cy="15" r="11.300" fill="none" stroke="#fff" stroke-width="1.500"/><circle cx="15" cy="15" r="11.300" fill="none" stroke="#b03a3a" stroke-width="1.500" stroke-dasharray="4.440 4.440"/><path d="M15 6.500v6M15 17.500v6M6.500 15h6M17.500 15h6" stroke="#a8a8a8" stroke-width="1.500"/></svg>
<div class="a" style="left:8.3px;top:134.9px;width:39.4px;height:137.7px;background:rgba(47,47,47,.97);border-radius:4px;"></div>
<svg style="left:12.0px;top:136.8px" width="30" height="30" viewBox="0 0 30 30"><path d="M15 3.700l3.300 4.600h-6.600zM15 26.300l3.300-4.600h-6.600zM3.700 15l4.600-3.300v6.600zM26.300 15l-4.600-3.300v6.600z" fill="#e6e6e6"/><path d="M15 9.300v3M15 17.700v3M9.300 15h3M17.700 15h3" stroke="#e6e6e6" stroke-width="1.700"/></svg>
<div class="a" style="left:8.3px;top:168.2px;width:39.4px;height:0.8px;background:rgba(30,30,30,.55);"></div>
<svg style="left:12.0px;top:171.4px" width="30" height="30" viewBox="0 0 30 30"><path d="M7.300 10.600a9 9 0 0 1 15.400 0M7.300 19.400a9 9 0 0 0 15.400 0" fill="none" stroke="#e6e6e6" stroke-width="1.300"/><path d="M2.800 12.600h6.600l-3.300 5zM27.200 17.400h-6.600l3.300-5z" fill="#e6e6e6"/><path d="M15 11.300l3.700 3.700-3.700 3.700-3.700-3.700z" fill="#bdbdbd"/></svg>
<div class="a" style="left:8.3px;top:203.2px;width:39.4px;height:0.8px;background:rgba(30,30,30,.55);"></div>
<svg style="left:12.0px;top:206.4px" width="30" height="30" viewBox="0 0 30 30"><path d="M8.500 10v-4.500h15.500v15.500h-5" fill="none" stroke="#b8b8b8" stroke-width="1.300"/><rect x="6" y="12.500" width="9" height="9" fill="#e6e6e6"/><path d="M15.500 13l5.500-5.500M17 7.300h4.200v4.200" fill="none" stroke="#e6e6e6" stroke-width="1.300"/></svg>
<svg style="left:42.3px;top:231.2px" width="4" height="4"><path d="M4 0v4h-4z" fill="#9a9a9a"/></svg>
<div class="a" style="left:8.3px;top:238.2px;width:39.4px;height:0.8px;background:rgba(30,30,30,.55);"></div>
<svg style="left:12.0px;top:241.4px" width="30" height="30" viewBox="0 0 30 30"><circle cx="15" cy="15" r="10.300" fill="none" stroke="#e6e6e6" stroke-width="1.100" stroke-dasharray="9.200 7" stroke-dashoffset="-3.500"/><rect x="11.200" y="11.200" width="7.600" height="7.600" fill="#e6e6e6"/><path d="M15 3.300l3 4.200h-6zM15 26.700l3-4.200h-6zM3.300 15l4.200-3v6zM26.700 15l-4.200-3v6z" fill="#e6e6e6"/></svg>
<div class="a" style="left:8.3px;top:279.5px;width:39.4px;height:68.6px;background:rgba(47,47,47,.97);border-radius:4px;"></div>
<svg style="left:12.0px;top:282.0px" width="30" height="30" viewBox="0 0 30 30"><path d="M2.100 21.100l1.200-4.300 12.500-11.200 3.300 3.700-12.500 11.200z" fill="#e6e6e6"/><path d="M16.600 4.900l1.800-1.600 3.300 3.700-1.800 1.600z" fill="#e6e6e6"/><path d="M2.100 21.100l.5-1.800 1.300 1.400z" fill="#444"/><path d="M2.800 22c3 3.200 7 1.300 10-1.500c3.500-3.300 7.500-3.300 11.500 2" fill="none" stroke="#8fd6a4" stroke-width="1.500"/></svg>
<svg style="left:42.3px;top:306.9px" width="4" height="4"><path d="M4 0v4h-4z" fill="#9a9a9a"/></svg>
<div class="a" style="left:8.3px;top:313.7px;width:39.4px;height:0.8px;background:rgba(30,30,30,.55);"></div>
<svg style="left:12.0px;top:316.9px" width="30" height="30" viewBox="0 0 30 30"><path d="M5.400 3.200h4.900v19.700h15.200v3.100h-20.100z" fill="#e6e6e6"/><path d="M7.500 5.500h2.800M7.500 8h2.800M7.500 10.500h2.800M7.500 13h2.800M7.500 15.500h2.800M7.500 18h2.800M7.500 20.500h2.800M12.500 26v-1.800M15 26v-1.800M17.500 26v-1.800M20 26v-1.800M22.500 26v-1.800" stroke="#333" stroke-width="1"/><path d="M10.300 22.900v-9.500a9.500 9.500 0 0 1 9.500 9.500z" fill="#8fd6a4"/><path d="M10.300 11a11.900 11.900 0 0 1 11.900 11.900" fill="none" stroke="#8fd6a4" stroke-width="1.200"/></svg>
<div class="a" style="left:8.3px;top:354.4px;width:39.4px;height:69.2px;background:rgba(47,47,47,.97);border-radius:4px;"></div>
<svg style="left:12.0px;top:356.8px" width="30" height="30" viewBox="0 0 30 30"><path d="M2.100 20.300l1.200-4.300 12.500-11.200 3.300 3.700-12.500 11.200z" fill="#e6e6e6"/><path d="M16.600 4.100l1.800-1.600 3.300 3.700-1.800 1.600z" fill="#e6e6e6"/><path d="M2.600 21c2 4 7.500 3.500 10.700-2.500c2.500-4.500 8-4.500 11.600 2" fill="none" stroke="#8fd6a4" stroke-width="1.300"/><path d="M2.600 21l1.300 5.500M13.300 18.500l-2.300 7M13.300 18.500l2.500-6M24.900 20.500v-8.500" stroke="#e6e6e6" stroke-width=".8"/><g fill="#e6e6e6"><circle cx="3.900" cy="26.500" r="1.200"/><circle cx="11" cy="25.500" r="1.200"/><circle cx="13.300" cy="18.500" r="1.300"/><circle cx="15.800" cy="12.500" r="1.200"/><circle cx="24.900" cy="12" r="1.200"/><circle cx="24.900" cy="20.500" r="1.300"/></g></svg>
<div class="a" style="left:8.3px;top:388.2px;width:39.4px;height:0.8px;background:rgba(30,30,30,.55);"></div>
<svg style="left:12.0px;top:391.9px" width="30" height="30" viewBox="0 0 30 30"><path d="M5 27c.3-5 2-9 5.300-10.800" fill="none" stroke="#e6e6e6" stroke-width="1.600"/><path d="M10.300 16.200c5-2.500 9-5.500 12.400-10.600" fill="none" stroke="#8fd6a4" stroke-width="1.500"/><rect x="3.800" y="25.800" width="2.400" height="2.400" fill="#e6e6e6"/><circle cx="10.300" cy="16.200" r="1.600" fill="#e6e6e6"/><circle cx="22.700" cy="5.600" r="2" fill="#8fd6a4"/><path d="M8 5.200l5.200-.4-.7 5.200z" fill="#8fd6a4"/><path d="M8.300 9.700l3-3" stroke="#8fd6a4" stroke-width="1.400"/></svg>
<svg style="left:42.3px;top:417.2px" width="4" height="4"><path d="M4 0v4h-4z" fill="#9a9a9a"/></svg>
<div class="a" style="left:8.3px;top:429.4px;width:39.4px;height:68.2px;background:rgba(47,47,47,.97);border-radius:4px;"></div>
<svg style="left:12.0px;top:431.9px" width="30" height="30" viewBox="0 0 30 30"><path d="M6.500 23.500c0-6 6-13 17-17c0 6-6 13-17 17z" fill="#d8b8e8"/><path d="M4.500 25.600l21.200-20.700" stroke="#e6e6e6" stroke-width="1.300"/><path d="M4.300 5l5 1-4 4zM25.700 25.500l-5-1 4-4z" fill="#d8b8e8"/><path d="M7 7.700l2.500 2.500M23 22.800l-2.500-2.500" stroke="#d8b8e8" stroke-width="1.300"/><circle cx="14.800" cy="15.400" r="1.400" fill="#fff"/></svg>
<div class="a" style="left:8.3px;top:463.6px;width:39.4px;height:0.8px;background:rgba(30,30,30,.55);"></div>
<svg style="left:12.0px;top:466.6px" width="30" height="30" viewBox="0 0 30 30"><path d="M5 20.500l3.500 4M7.500 18.500l3.500 4M10 16.500l3.500 4M12.500 14.300l3.500 4M15 12l3.500 4M17.500 10l3.500 4M20 7.800l3.500 4M22.500 5.500l3.500 4" stroke="#e6e6e6" stroke-width="1" stroke-dasharray="1.100 1"/><path d="M3.100 26.300l24.100-23.800" stroke="#e6e6e6" stroke-width="1.500"/><path d="M5.500 11c2.500-2.700 6-3.700 9.500-3M22 16c1 2.500.5 5-1.500 7" fill="none" stroke="#d8b8e8" stroke-width="1.500"/><path d="M4.500 13.500l-.5-5 4.500 1z" fill="#d8b8e8"/><circle cx="27.200" cy="2.800" r="1.800" fill="#fff"/><circle cx="3.100" cy="26.300" r="1.800" fill="#fff"/></svg>
<div class="a" style="left:8.3px;top:504.0px;width:39.4px;height:69.3px;background:rgba(47,47,47,.97);border-radius:4px;"></div>
<svg style="left:12.0px;top:506.7px" width="30" height="30" viewBox="0 0 30 30"><path d="M1.200 11l16.900-4.300 10.400 13.700-5.200 4.200h-12.700z" fill="#d8b8e8"/><path d="M1.200 11l14.300-.9 7.800 14.500M15.500 10.100l2.600-3.400" fill="none" stroke="#3a3040" stroke-width=".9"/><path d="M22.800 3.500l4.200-2.200v4.400z" fill="#d8b8e8"/><path d="M26 3.500h3" stroke="#d8b8e8" stroke-width="1.300"/></svg>
<div class="a" style="left:8.3px;top:538.6px;width:39.4px;height:0.8px;background:rgba(30,30,30,.55);"></div>
<svg style="left:12.0px;top:541.9px" width="30" height="30" viewBox="0 0 30 30"><path d="M2.900 24.900l9.800-1.400-.7-10.800h8.200l7-5.400" fill="none" stroke="#e8e0ec" stroke-width="1"/><g fill="#d8b8e8"><circle cx="2.900" cy="24.900" r="1.800"/><circle cx="12.700" cy="23.500" r="1.800"/><circle cx="12" cy="12.700" r="1.800"/><circle cx="20.200" cy="12.700" r="1.800"/><circle cx="27.200" cy="7.300" r="1.800"/></g></svg>
<svg style="left:-1px;top:-50px" width="1586" height="944" viewBox="0 0 1586 944"><path d="M1534.800 151V118.600" stroke="#7ec710" stroke-width="2"/><path d="M1534.800 151H1567.200" stroke="#f2385a" stroke-width="2"/>
<circle cx="1502.400" cy="151" r="6" fill="#8a2f3f"/><circle cx="1534.800" cy="183.400" r="6" fill="#5a8420"/>
<circle cx="1534.800" cy="118.600" r="8.200" fill="#82cc14"/><circle cx="1567.200" cy="151" r="8.200" fill="#f5365a"/><circle cx="1534.800" cy="151" r="8.200" fill="#2b8cf0"/>
<g font-family="DejaVu Sans, Liberation Sans, sans-serif" font-size="10.500" fill="#000" text-anchor="middle"><text x="1534.800" y="122.400">Y</text><text x="1567.200" y="154.800">X</text><text x="1534.800" y="154.800">Z</text></g>
<g fill="rgba(38,38,38,.7)"><circle cx="1561.900" cy="205.400" r="13.800"/><circle cx="1561.900" cy="235.500" r="13.800"/><circle cx="1561.900" cy="266.800" r="13.800"/><circle cx="1561.900" cy="297" r="13.800"/></g>
<g transform="translate(1561.900,205.400)"><circle cx="1.500" cy="-1.500" r="5.500" fill="#e6e6e6"/><path d="M-2.500 2.500l-5 5" stroke="#e6e6e6" stroke-width="2.200" stroke-linecap="round"/><path d="M-1.500 -1.500h6M1.500 -4.500v6" stroke="#2a2a2a" stroke-width="1.200"/></g>
<g transform="translate(1561.900,235.500)" fill="#e6e6e6"><path d="M-5.500 1l-2.500-3.500 1.500-1 3 2.500v-5.500h2v-2h2v1h2v1.500h2v10c0 3-2 5-5.500 5c-3 0-4-1.500-5-3.500z"/></g>
<g transform="translate(1561.900,266.800)" fill="#e6e6e6"><circle cx="-4" cy="-4.500" r="3"/><circle cx="2.500" cy="-5" r="3.800"/><rect x="-6.500" y="-1.500" width="11" height="8" rx="1"/><path d="M5 1.500l4-2.500v7.500l-4-2.500z"/><path d="M-8.500 2.500l-1.500-1v4l1.500-1z"/></g>
<g transform="translate(1561.900,297)" fill="none" stroke="#e6e6e6" stroke-width="1.300"><rect x="-7.500" y="-7.500" width="15" height="15"/><path d="M-2.500 -7.500v15M2.500 -7.500v15M-7.500 -2.500h15M-7.500 2.500h15"/></g></svg>
<svg style="left:1577.0px;top:66.0px" width="7" height="12"><path d="M5.500 1.500l-4 4.500 4 4.500" fill="none" stroke="#9a9a9a" stroke-width="1.300"/></svg>
</div>
<div class="a" style="left:1px;top:947px;width:1584px;height:72.500px;border-radius:5px;overflow:hidden;background:#3a3a3a">
<div class="a" style="left:0.0px;top:0.0px;width:1584.0px;height:25.7px;background:#3b3b3b;"></div>
<div class="a" style="left:0.0px;top:25.7px;width:1584.0px;height:22.3px;background:#2a2a2a;"></div>
<div class="a" style="left:0.0px;top:25.7px;width:14.8px;height:22.3px;background:#262626;"></div>
<div class="a" style="left:0.0px;top:48.0px;width:1584.0px;height:24.5px;background:#2f2f2f;"></div>
<div class="a" style="left:14.4px;top:48.0px;width:1469.1px;height:24.5px;background:#3e3e3e;"></div>
<svg style="left:0;top:0" width="1584" height="73"><path d="M38.0 48V72.500M97.0 48V72.500M156.0 48V72.500M215.0 48V72.500M274.0 48V72.500M333.0 48V72.500M392.0 48V72.500M451.0 48V72.500M510.0 48V72.500M569.0 48V72.500M628.0 48V72.500M687.0 48V72.500M746.0 48V72.500M805.0 48V72.500M864.0 48V72.500M923.0 48V72.500M982.0 48V72.500M1041.0 48V72.500M1100.0 48V72.500M1159.0 48V72.500M1218.0 48V72.500M1277.0 48V72.500M1336.0 48V72.500M1395.0 48V72.500M1454.0 48V72.500M1513.0 48V72.500M1572.0 48V72.500" stroke="#333" stroke-width="1"/><path d="M8.5 48V72.500M67.5 48V72.500M126.5 48V72.500M185.5 48V72.500M244.5 48V72.500M303.5 48V72.500M362.5 48V72.500M421.5 48V72.500M480.5 48V72.500M539.5 48V72.500M598.5 48V72.500M657.5 48V72.500M716.5 48V72.500M775.5 48V72.500M834.5 48V72.500M893.5 48V72.500M952.5 48V72.500M1011.5 48V72.500M1070.5 48V72.500M1129.5 48V72.500M1188.5 48V72.500M1247.5 48V72.500M1306.5 48V72.500M1365.5 48V72.500M1424.5 48V72.500M1483.5 48V72.500M1542.5 48V72.500" stroke="#2c2c2c" stroke-width="1.300"/><path d="M14.4 48V72.500M1483.5 48V72.500" stroke="#1c1c1c" stroke-width="1.300"/></svg>
<div class="t" style="top:30.0px;font-size:10.5px;letter-spacing:-0.30px;line-height:14px;left:4.5px;color:#c2c2c2;">0</div>
<div class="t" style="top:30.0px;font-size:10.5px;letter-spacing:-0.30px;line-height:14px;left:60.3px;color:#c2c2c2;">10</div>
<div class="t" style="top:30.0px;font-size:10.5px;letter-spacing:-0.30px;line-height:14px;left:119.2px;color:#c2c2c2;">20</div>
<div class="t" style="top:30.0px;font-size:10.5px;letter-spacing:-0.30px;line-height:14px;left:178.2px;color:#c2c2c2;">30</div>
<div class="t" style="top:30.0px;font-size:10.5px;letter-spacing:-0.30px;line-height:14px;left:237.1px;color:#c2c2c2;">40</div>
<div class="t" style="top:30.0px;font-size:10.5px;letter-spacing:-0.30px;line-height:14px;left:296.1px;color:#c2c2c2;">50</div>
<div class="t" style="top:30.0px;font-size:10.5px;letter-spacing:-0.30px;line-height:14px;left:355.0px;color:#c2c2c2;">60</div>
<div class="t" style="top:30.0px;font-size:10.5px;letter-spacing:-0.30px;line-height:14px;left:414.0px;color:#c2c2c2;">70</div>
<div class="t" style="top:30.0px;font-size:10.5px;letter-spacing:-0.30px;line-height:14px;left:472.9px;color:#c2c2c2;">80</div>
<div class="t" style="top:30.0px;font-size:10.5px;letter-spacing:-0.30px;line-height:14px;left:531.9px;color:#c2c2c2;">90</div>
<div class="t" style="top:30.0px;font-size:10.5px;letter-spacing:-0.30px;line-height:14px;left:587.6px;color:#c2c2c2;">100</div>
<div class="t" style="top:30.0px;font-size:10.5px;letter-spacing:-0.30px;line-height:14px;left:646.6px;color:#c2c2c2;">110</div>
<div class="t" style="top:30.0px;font-size:10.5px;letter-spacing:-0.30px;line-height:14px;left:705.5px;color:#c2c2c2;">120</div>
<div class="t" style="top:30.0px;font-size:10.5px;letter-spacing:-0.30px;line-height:14px;left:764.5px;color:#c2c2c2;">130</div>
<div class="t" style="top:30.0px;font-size:10.5px;letter-spacing:-0.30px;line-height:14px;left:823.4px;color:#c2c2c2;">140</div>
<div class="t" style="top:30.0px;font-size:10.5px;letter-spacing:-0.30px;line-height:14px;left:882.4px;color:#c2c2c2;">150</div>
<div class="t" style="top:30.0px;font-size:10.5px;letter-spacing:-0.30px;line-height:14px;left:941.3px;color:#c2c2c2;">160</div>
<div class="t" style="top:30.0px;font-size:10.5px;letter-spacing:-0.30px;line-height:14px;left:1000.3px;color:#c2c2c2;">170</div>
<div class="t" style="top:30.0px;font-size:10.5px;letter-spacing:-0.30px;line-height:14px;left:1059.2px;color:#c2c2c2;">180</div>
<div class="t" style="top:30.0px;font-size:10.5px;letter-spacing:-0.30px;line-height:14px;left:1118.2px;color:#c2c2c2;">190</div>
<div class="t" style="top:30.0px;font-size:10.5px;letter-spacing:-0.30px;line-height:14px;left:1177.1px;color:#c2c2c2;">200</div>
<div class="t" style="top:30.0px;font-size:10.5px;letter-spacing:-0.30px;line-height:14px;left:1236.1px;color:#c2c2c2;">210</div>
<div class="t" style="top:30.0px;font-size:10.5px;letter-spacing:-0.30px;line-height:14px;left:1295.0px;color:#c2c2c2;">220</div>
<div class="t" style="top:30.0px;font-size:10.5px;letter-spacing:-0.30px;line-height:14px;left:1354.0px;color:#c2c2c2;">230</div>
<div class="t" style="top:30.0px;font-size:10.5px;letter-spacing:-0.30px;line-height:14px;left:1412.9px;color:#c2c2c2;">240</div>
<div class="t" style="top:30.0px;font-size:10.5px;letter-spacing:-0.30px;line-height:14px;left:1471.9px;color:#c2c2c2;">250</div>
<div class="t" style="top:30.0px;font-size:10.5px;letter-spacing:-0.30px;line-height:14px;left:1530.8px;color:#c2c2c2;">260</div>
<div class="a" style="left:209.3px;top:28.7px;width:24.0px;height:16.2px;background:#5279b8;border-radius:3px;"></div>
<div class="a" style="left:219.9px;top:44.0px;width:2.0px;height:28.5px;background:#5279b8;"></div>
<div class="t" style="top:30.0px;font-size:10.5px;letter-spacing:-0.30px;line-height:14px;left:214.4px;color:#fff;">36</div>
<div class="a" style="left:51.0px;top:61.5px;width:1524.5px;height:8.3px;background:#5b5b5b;border-radius:4.2px;"></div>
<div class="a" style="left:52.3px;top:63.2px;width:5px;height:5px;border-radius:3px;background:#484848;box-shadow:0 0 0 1px #4e4e4e"></div>
<div class="a" style="left:1568.5px;top:63.2px;width:5px;height:5px;border-radius:3px;background:#484848;box-shadow:0 0 0 1px #4e4e4e"></div>
<div class="a" style="left:7.0px;top:61.5px;width:7.0px;height:8.3px;background:#454545;border-radius:4px 0 0 4px;"></div>
<div class="a" style="left:7.3px;top:3.7px;width:31.0px;height:18.3px;background:#2b2b2b;border-radius:3px;box-shadow:0 0 0 1px #383838;"></div>
<svg style="left:11.0px;top:5.5px" width="15" height="15"><circle cx="7.500" cy="7.500" r="6.800" fill="#e0e0e0"/><path d="M9.500 3.500l-3.500 4 2.500 4" stroke="#2b2b2b" stroke-width="1.700" fill="none"/></svg>
<svg style="left:28.5px;top:11.0px" width="8" height="6"><path d="M.5 .7l3.5 3.3l3.5 -3.3" fill="none" stroke="#e0e0e0" stroke-width="1.3"/></svg>
<div class="a" style="left:44.7px;top:3.7px;width:68.6px;height:18.3px;background:#2b2b2b;border-radius:3px 0 0 3px;box-shadow:0 0 0 1px #383838;"></div>
<div class="a" style="left:113.9px;top:3.7px;width:58.4px;height:18.3px;background:#2b2b2b;border-radius:0 3px 3px 0;box-shadow:0 0 0 1px #383838;"></div>
<div class="t" style="top:6.0px;font-size:10.5px;letter-spacing:-0.23px;line-height:14px;left:52.3px;color:#e4e4e4;">Playback</div>
<svg style="left:103.5px;top:11.0px" width="8" height="6"><path d="M.5 .7l3.5 3.3l3.5 -3.3" fill="none" stroke="#e0e0e0" stroke-width="1.3"/></svg>
<div class="t" style="top:6.0px;font-size:10.5px;letter-spacing:-0.10px;line-height:14px;left:121.0px;color:#e4e4e4;">Keying</div>
<svg style="left:162.7px;top:11.0px" width="8" height="6"><path d="M.5 .7l3.5 3.3l3.5 -3.3" fill="none" stroke="#e0e0e0" stroke-width="1.3"/></svg>
<div class="t" style="top:6.0px;font-size:10.5px;letter-spacing:-0.05px;line-height:14px;left:180.0px;color:#e4e4e4;">View</div>
<div class="t" style="top:6.0px;font-size:10.5px;letter-spacing:-0.10px;line-height:14px;left:220.0px;color:#e4e4e4;">Marker</div>
<div class="a" style="left:700.0px;top:3.7px;width:18.3px;height:18.3px;background:#595959;border-radius:3px 0 0 3px;"></div>
<div class="a" style="left:718.8px;top:3.7px;width:19.2px;height:18.3px;background:#383838;border-radius:0 3px 3px 0;"></div>
<svg style="left:704.7px;top:8.5px" width="9" height="9"><circle cx="4.500" cy="4.500" r="4" fill="#e6e6e6"/></svg>
<svg style="left:724.5px;top:11.0px" width="8" height="6"><path d="M.5 .7l3.5 3.3l3.5 -3.3" fill="none" stroke="#5a5a5a" stroke-width="1.3"/></svg>
<div class="a" style="left:745.0px;top:3.7px;width:19.2px;height:18.3px;background:#595959;border-radius:3px 0 0 3px;"></div>
<svg style="left:745.6px;top:4.8px" width="18" height="16"><path d="M4 3.500v9" stroke="#eee" stroke-width="1.600"/><path d="M13 3.500v9l-7-4.500z" fill="#eee"/></svg>
<div class="a" style="left:764.7px;top:3.7px;width:19.2px;height:18.3px;background:#595959;"></div>
<svg style="left:765.3px;top:4.8px" width="18" height="16"><path d="M5.500 4l4 4-4 4-4-4z" fill="#eee"/><path d="M16 4v8l-6-4z" fill="#eee"/></svg>
<div class="a" style="left:784.4px;top:3.7px;width:19.2px;height:18.3px;background:#595959;"></div>
<svg style="left:785.0px;top:4.8px" width="18" height="16"><path d="M13.500 2.500v11l-10-5.500z" fill="#eee"/></svg>
<div class="a" style="left:804.1px;top:3.7px;width:19.2px;height:18.3px;background:#595959;"></div>
<svg style="left:804.7px;top:4.8px" width="18" height="16"><path d="M4.500 2.500v11l10-5.500z" fill="#eee"/></svg>
<div class="a" style="left:823.8px;top:3.7px;width:19.2px;height:18.3px;background:#595959;"></div>
<svg style="left:824.4px;top:4.8px" width="18" height="16"><path d="M12.500 4l4 4-4 4-4-4z" fill="#eee"/><path d="M2 4v8l6-4z" fill="#eee"/></svg>
<div class="a" style="left:843.5px;top:3.7px;width:19.0px;height:18.3px;background:#595959;border-radius:0 3px 3px 0;"></div>
<svg style="left:844.1px;top:4.8px" width="18" height="16"><path d="M14 3.500v9" stroke="#eee" stroke-width="1.600"/><path d="M5 3.500v9l7-4.500z" fill="#eee"/></svg>
<div class="a" style="left:1306.7px;top:3.7px;width:73.3px;height:18.3px;background:#595959;border-radius:3px;"></div>
<div class="t" style="top:6.0px;font-size:10.5px;letter-spacing:-0.18px;line-height:14px;left:1336.8px;color:#e6e6e6;">36</div>
<div class="a" style="left:1387.3px;top:3.7px;width:17.7px;height:18.3px;background:#595959;border-radius:3px 0 0 3px;"></div>
<svg style="left:1389.0px;top:5.0px" width="15" height="16"><circle cx="7" cy="9" r="5.300" fill="none" stroke="#e6e6e6" stroke-width="1.200"/><path d="M7 9v-3.500M7 9h2.500M5 1.500h4M11.500 3l1.500 1.500" stroke="#e6e6e6" stroke-width="1.200" fill="none"/></svg>
<div class="a" style="left:1405.6px;top:3.7px;width:87.4px;height:18.3px;background:#595959;"></div>
<div class="t" style="top:6.0px;font-size:10.5px;letter-spacing:-0.45px;line-height:14px;left:1421.3px;color:#e6e6e6;">Start</div>
<div class="t" style="top:6.0px;font-size:10.5px;letter-spacing:-0.30px;line-height:14px;left:1474.0px;color:#e6e6e6;">1</div>
<div class="a" style="left:1493.6px;top:3.7px;width:83.7px;height:18.3px;background:#595959;border-radius:0 3px 3px 0;"></div>
<div class="t" style="top:6.0px;font-size:10.5px;letter-spacing:-0.55px;line-height:14px;left:1509.0px;color:#e6e6e6;">End</div>
<div class="t" style="top:6.0px;font-size:10.5px;letter-spacing:-0.01px;line-height:14px;left:1543.3px;color:#e6e6e6;">250</div>
<svg style="left:0.0px;top:43.3px" width="6" height="9"><path d="M.8 .8l4 3.500-4 3.500" fill="none" stroke="#8a8a8a" stroke-width="1.100"/></svg>
<svg style="left:1577.5px;top:40.5px" width="6" height="11"><path d="M5 1l-4 4.500 4 4.500" fill="none" stroke="#8a8a8a" stroke-width="1.200"/></svg>
</div>
<div class="a" style="left:1588px;top:50px;width:331px;height:307.800px;border-radius:5px;overflow:hidden;background:#282828">
<div class="a" style="left:0.0px;top:45.8px;width:331.0px;height:20.0px;background:#2c2c2c;"></div>
<div class="a" style="left:0.0px;top:85.8px;width:331.0px;height:20.0px;background:#2c2c2c;"></div>
<div class="a" style="left:0.0px;top:125.8px;width:331.0px;height:20.0px;background:#2c2c2c;"></div>
<div class="a" style="left:0.0px;top:165.8px;width:331.0px;height:20.0px;background:#2c2c2c;"></div>
<div class="a" style="left:0.0px;top:205.8px;width:331.0px;height:20.0px;background:#2c2c2c;"></div>
<div class="a" style="left:0.0px;top:245.8px;width:331.0px;height:20.0px;background:#2c2c2c;"></div>
<div class="a" style="left:0.0px;top:285.8px;width:331.0px;height:20.0px;background:#2c2c2c;"></div>
<div class="a" style="left:0.0px;top:0.0px;width:331.0px;height:25.2px;background:#3c3c3c;"></div>
<div class="a" style="left:0.0px;top:65.8px;width:331.0px;height:20.2px;background:#3b5488;"></div>
<div class="a" style="left:9.0px;top:2.6px;width:30.2px;height:18.6px;background:#2b2b2b;border-radius:3px;box-shadow:0 0 0 1px #444;"></div>
<svg style="left:12.0px;top:4.0px" width="16" height="16"><rect x="1" y="1" width="4.500" height="2.600" fill="#dcdcdc"/><rect x="7" y="6.500" width="7" height="2.800" fill="#dcdcdc"/><rect x="7" y="11.500" width="7" height="2.800" fill="#dcdcdc"/><path d="M3 4v9h3.500M3 8h3.500" fill="none" stroke="#dcdcdc" stroke-width="1"/></svg>
<svg style="left:30.0px;top:9.5px" width="8" height="6"><path d="M.5 .7l3.5 3.3l3.5 -3.3" fill="none" stroke="#e0e0e0" stroke-width="1.3"/></svg>
<div class="a" style="left:46.0px;top:2.6px;width:30.4px;height:18.6px;background:#2b2b2b;border-radius:3px;box-shadow:0 0 0 1px #444;"></div>
<svg style="left:49.0px;top:4.0px" width="16" height="16"><path d="M1.500 4.500v9.500h9.500M3.500 2.500v9.500h9.500" fill="none" stroke="#dcdcdc" stroke-width="1"/><rect x="5.500" y=".8" width="9" height="9" fill="#dcdcdc"/><path d="M6.500 8.800l3-4.500 2.300 3 .8-.8 1.400 2.300z" fill="#2b2b2b"/><circle cx="12.300" cy="3.300" r="1" fill="#2b2b2b"/></svg>
<svg style="left:67.0px;top:9.5px" width="8" height="6"><path d="M.5 .7l3.5 3.3l3.5 -3.3" fill="none" stroke="#e0e0e0" stroke-width="1.3"/></svg>
<div class="a" style="left:99.8px;top:2.6px;width:109.9px;height:18.6px;background:#1d1d1d;border-radius:3px;box-shadow:0 0 0 1px #3a3a3a;"></div>
<svg style="left:102.5px;top:4.0px" width="16" height="16"><circle cx="9.800" cy="6" r="4.300" fill="none" stroke="#e0e0e0" stroke-width="1.300"/><path d="M6.800 9l-5.300 5.500" stroke="#e0e0e0" stroke-width="1.500"/></svg>
<div class="a" style="left:267.7px;top:2.6px;width:30.0px;height:18.6px;background:#2b2b2b;border-radius:3px;box-shadow:0 0 0 1px #444;"></div>
<svg style="left:271.0px;top:4.5px" width="14" height="15"><path d="M1 1h11.500l-4.500 6v6.500l-2.500-1.500v-5z" fill="none" stroke="#dcdcdc" stroke-width="1.200"/></svg>
<svg style="left:287.5px;top:9.5px" width="8" height="6"><path d="M.5 .7l3.5 3.3l3.5 -3.3" fill="none" stroke="#e0e0e0" stroke-width="1.3"/></svg>
<div class="a" style="left:304.7px;top:2.6px;width:18.3px;height:18.6px;background:#555;border-radius:3px;"></div>
<svg style="left:306.0px;top:3.5px" width="16" height="16"><rect x="1.500" y="3.500" width="9" height="2.500" fill="none" stroke="#ccc" stroke-width="1"/><path d="M2 7v7.500h8v-5" fill="none" stroke="#ccc" stroke-width="1.100"/><path d="M4.500 9.500h3" stroke="#ccc" stroke-width="1.200"/><circle cx="11.500" cy="4" r="3.500" fill="#555" stroke="#eee" stroke-width="1"/><path d="M11.500 2v4M9.500 4h4" stroke="#eee" stroke-width="1.100"/></svg>
<svg style="left:23.3px;top:30.1px" width="14" height="13"><rect x="0" y="0" width="13.500" height="3.600" fill="#d4d4d4"/><path d="M1 4.600h11.500v8.400h-11.500z" fill="#d4d4d4"/><rect x="4.300" y="6.300" width="4.900" height="2" fill="#2a2a2a"/></svg>
<div class="t" style="top:30.1px;font-size:10.5px;letter-spacing:-0.28px;line-height:14px;left:44.4px;color:#cfcfcf;">Scene Collection</div>
<svg style="left:26.9px;top:54.3px" width="6" height="6"><path d="M0 0h5.600l-2.800 5.800z" fill="#cfcfcf"/></svg>
<div class="a" style="left:40.4px;top:47.6px;width:19.2px;height:16.8px;background:#4d4d4d;border-radius:4px;box-shadow:inset 0 0 0 1px #707070;"></div>
<svg style="left:43.3px;top:49.7px" width="14" height="13"><rect x="0" y="0" width="13.500" height="3.600" fill="#d4d4d4"/><path d="M1 4.600h11.500v8.400h-11.500z" fill="#d4d4d4"/><rect x="4.300" y="6.300" width="4.900" height="2" fill="#2a2a2a"/></svg>
<div class="t" style="top:49.9px;font-size:10.5px;letter-spacing:-0.19px;line-height:14px;left:64.4px;color:#cfcfcf;">Collection</div>
<div class="a" style="left:29.0px;top:71.2px;width:1.0px;height:69.7px;background:#5c5c5c;"></div>
<svg style="left:47.0px;top:73.5px" width="6" height="7"><path d="M0 0l5.800 3-5.800 3z" fill="#cfcfcf"/></svg>
<div class="t" style="top:69.8px;font-size:10.5px;letter-spacing:-0.21px;line-height:14px;left:84.6px;color:#f0a428;">BezierCircle</div>
<svg style="left:47.0px;top:93.7px" width="6" height="7"><path d="M0 0l5.800 3-5.800 3z" fill="#cfcfcf"/></svg>
<div class="t" style="top:90.0px;font-size:10.5px;letter-spacing:-0.47px;line-height:14px;left:84.6px;color:#cfcfcf;">Camera</div>
<svg style="left:47.0px;top:113.7px" width="6" height="7"><path d="M0 0l5.800 3-5.800 3z" fill="#cfcfcf"/></svg>
<div class="t" style="top:110.0px;font-size:10.5px;letter-spacing:-0.49px;line-height:14px;left:84.6px;color:#cfcfcf;">Empty</div>
<svg style="left:47.0px;top:133.7px" width="6" height="7"><path d="M0 0l5.800 3-5.800 3z" fill="#cfcfcf"/></svg>
<div class="t" style="top:130.0px;font-size:10.5px;letter-spacing:-0.32px;line-height:14px;left:84.6px;color:#cfcfcf;">Light</div>
<div class="a" style="left:60.2px;top:67.2px;width:19.8px;height:17.5px;background:rgba(255,255,255,.22);border-radius:4px;box-shadow:inset 0 0 0 1px rgba(255,255,255,.18);"></div>
<svg style="left:62.5px;top:69.0px" width="16" height="14"><path d="M3 2c6-1.800 10.500 0 10.500 5c0 4.500-5 6-10.800 5.300" fill="none" stroke="#e0904f" stroke-width="2.600" stroke-linecap="round"/></svg>
<svg style="left:62.0px;top:88.3px" width="16" height="15"><circle cx="4" cy="4.300" r="3.300" fill="#e0904f"/><circle cx="10.500" cy="3.800" r="3.800" fill="#e0904f"/><rect x="1.500" y="7.500" width="10" height="6.500" rx="1" fill="#e0904f"/><path d="M11.500 10.300l4-2.300v6.300l-4-2.300z" fill="#e0904f"/><path d="M1.500 10.500l-1.500-1v3.500l1.500-1z" fill="#e0904f"/><circle cx="4" cy="4.300" r="1" fill="#282828"/><circle cx="10.500" cy="3.800" r="1.100" fill="#282828"/></svg>
<svg style="left:62.5px;top:109.0px" width="15" height="15"><rect width="14.500" height="14" fill="#e0904f"/><path d="M1.500 12.500l5.300-8.500 5.300 8.500z" fill="#282828"/><circle cx="11.300" cy="3.500" r="1.500" fill="#282828"/></svg>
<svg style="left:63.5px;top:128.0px" width="13" height="16"><path d="M6.300 0a6 6 0 0 1 3.500 10.800v1.700h-7v-1.700a6 6 0 0 1 3.500-10.800z" fill="#e0904f"/><path d="M3 13.500h6.600M3.500 15h5.600" stroke="#e0904f" stroke-width="1"/><path d="M4.500 9.500v-3h3.600v3M3.500 6.500h5.600" fill="none" stroke="#282828" stroke-width="1"/></svg>
<div class="a" style="left:164.0px;top:67.2px;width:19.8px;height:17.5px;background:rgba(31,200,164,.16);border-radius:4px;box-shadow:inset 0 0 0 1px rgba(31,200,164,.3);"></div>
<svg style="left:166.0px;top:68.5px" width="16" height="15"><path d="M8.500 3c4.500 0 6 2.500 6 5c0 3.500-3.500 4.500-9 4.500" fill="none" stroke="#1fc8a4" stroke-width="1.200"/><rect x="6" y="1.500" width="3" height="3" fill="#33496f" stroke="#1fc8a4" stroke-width="1.100"/><rect x="2" y="11" width="3" height="3" fill="#33496f" stroke="#1fc8a4" stroke-width="1.100"/></svg>
<div class="a" style="left:143.0px;top:87.3px;width:20.0px;height:17.5px;background:#575757;border-radius:4px;box-shadow:inset 0 0 0 1px #6c6c6c;"></div>
<svg style="left:145.0px;top:89.0px" width="16" height="15"><circle cx="4.300" cy="4.500" r="2.700" fill="none" stroke="#1fc8a4" stroke-width="1.100"/><circle cx="10.300" cy="4" r="3.300" fill="none" stroke="#1fc8a4" stroke-width="1.100"/><rect x="2.500" y="8" width="9" height="5.500" rx="1" fill="none" stroke="#1fc8a4" stroke-width="1.100"/><path d="M11.500 10.300l3.500-2v5.500l-3.500-2" fill="none" stroke="#1fc8a4" stroke-width="1.100"/></svg>
<svg style="left:138.7px;top:108.8px" width="15" height="15"><rect x=".6" y=".6" width="13.300" height="13.300" fill="none" stroke="#d95f78" stroke-width="1.200"/><path d="M1 13.500l4.500-7.500 4.500 7.500z" fill="#d95f78"/><circle cx="10.200" cy="4.300" r="1.500" fill="#d95f78"/></svg>
<svg style="left:131.5px;top:127.6px" width="14" height="17"><circle cx="7" cy="6.800" r="6.200" fill="none" stroke="#1fc8a4" stroke-width="1.200"/><circle cx="7" cy="7.500" r="1.300" fill="#1fc8a4"/><path d="M7 9v3M7 13.500v2.500" stroke="#1fc8a4" stroke-width="1.200"/></svg>
<svg style="left:3.0px;top:69.0px" width="15" height="15"><path d="M2.500 4.500v6.500M4.500 12.500h6M12.500 11v-4.500M4.500 3h4" stroke="#c8d0e0" stroke-width="1" fill="none"/><rect x="1" y="1.500" width="3" height="3" fill="none" stroke="#c8d0e0"/><rect x="1" y="11" width="3" height="3" fill="none" stroke="#c8d0e0"/><rect x="11" y="11" width="3" height="3" fill="none" stroke="#c8d0e0"/><rect x="9.500" y="0" width="4.800" height="4.800" fill="#e8e8e8"/></svg>
<div class="a" style="left:289.0px;top:50.7px;width:10.2px;height:10.2px;background:#e6e6e6;border-radius:1.5px;"></div>
<svg style="left:289.3px;top:51.0px" width="10" height="10"><path d="M1.300 4.800l2.700 2.700 4.700-5.300" fill="none" stroke="#1a1a1a" stroke-width="2"/></svg>
<svg style="left:307.2px;top:50.2px" width="15" height="11"><path d="M1.700 5.500c2.800-4.500 8.800-4.500 11.600 0c-2.800 4.500-8.800 4.500-11.600 0z" fill="none" stroke="#e2e2e2" stroke-width="1.900" stroke-linejoin="round"/><circle cx="7.500" cy="5.500" r="2.300" fill="#e2e2e2"/><circle cx="7.500" cy="5.500" r="1" fill="#2a2a2a"/></svg>
<svg style="left:307.2px;top:70.2px" width="15" height="11"><path d="M1.700 5.500c2.800-4.500 8.800-4.500 11.600 0c-2.800 4.500-8.800 4.500-11.600 0z" fill="none" stroke="#e2e2e2" stroke-width="1.900" stroke-linejoin="round"/><circle cx="7.500" cy="5.500" r="2.300" fill="#e2e2e2"/><circle cx="7.500" cy="5.500" r="1" fill="#2a2a2a"/></svg>
<svg style="left:307.2px;top:90.2px" width="15" height="11"><path d="M1.700 5.500c2.800-4.500 8.800-4.500 11.600 0c-2.800 4.500-8.800 4.500-11.600 0z" fill="none" stroke="#e2e2e2" stroke-width="1.900" stroke-linejoin="round"/><circle cx="7.500" cy="5.500" r="2.300" fill="#e2e2e2"/><circle cx="7.500" cy="5.500" r="1" fill="#2a2a2a"/></svg>
<svg style="left:307.2px;top:110.2px" width="15" height="11"><path d="M1.700 5.500c2.800-4.500 8.800-4.500 11.600 0c-2.800 4.500-8.800 4.500-11.600 0z" fill="none" stroke="#e2e2e2" stroke-width="1.900" stroke-linejoin="round"/><circle cx="7.500" cy="5.500" r="2.300" fill="#e2e2e2"/><circle cx="7.500" cy="5.500" r="1" fill="#2a2a2a"/></svg>
<svg style="left:307.2px;top:130.2px" width="15" height="11"><path d="M1.700 5.500c2.800-4.500 8.800-4.500 11.600 0c-2.800 4.500-8.800 4.500-11.600 0z" fill="none" stroke="#e2e2e2" stroke-width="1.900" stroke-linejoin="round"/><circle cx="7.500" cy="5.500" r="2.300" fill="#e2e2e2"/><circle cx="7.500" cy="5.500" r="1" fill="#2a2a2a"/></svg>
</div>
<div class="a" style="left:1588px;top:363px;width:331px;height:656.500px;border-radius:5px;overflow:hidden;background:#424242">
<div class="a" style="left:0.0px;top:0.0px;width:331.0px;height:25.0px;background:#3c3c3c;"></div>
<div class="a" style="left:0.0px;top:25.0px;width:28.2px;height:632.0px;background:#222;"></div>
<div class="a" style="left:8.4px;top:2.8px;width:30.8px;height:18.4px;background:#2b2b2b;border-radius:3px;box-shadow:0 0 0 1px #444;"></div>
<svg style="left:12.0px;top:4.5px" width="16" height="15"><rect x=".6" y="1" width="12.500" height="5.500" rx="2.700" fill="#e0e0e0"/><rect x=".6" y="8.500" width="12.500" height="5.500" rx="2.700" fill="#e0e0e0"/><path d="M6.500 2h4a1.700 1.700 0 0 1 0 3.500h-4z" fill="#2b2b2b"/><path d="M9 9.500h1.500a1.700 1.700 0 0 1 0 3.500h-1.500z" fill="#2b2b2b"/></svg>
<svg style="left:29.5px;top:9.5px" width="8" height="6"><path d="M.5 .7l3.5 3.3l3.5 -3.3" fill="none" stroke="#e0e0e0" stroke-width="1.3"/></svg>
<div class="a" style="left:111.6px;top:2.8px;width:110.2px;height:18.4px;background:#1d1d1d;border-radius:3px;box-shadow:0 0 0 1px #3a3a3a;"></div>
<svg style="left:114.5px;top:4.3px" width="16" height="16"><circle cx="9.800" cy="6" r="4.300" fill="none" stroke="#e0e0e0" stroke-width="1.300"/><path d="M6.800 9l-5.300 5.500" stroke="#e0e0e0" stroke-width="1.500"/></svg>
<div class="a" style="left:2.3px;top:33.0px;width:26.0px;height:26.7px;background:#2c2c2c;border-radius:4px 0 0 4px;"></div>
<svg style="left:7.0px;top:38.4px" width="16" height="16"><path d="M3.700 1v7.300" stroke="#dcdcdc" stroke-width="1.300"/><path d="M1.600 9.300h4.200v3.700a2.100 2.100 0 0 1-4.200 0z" fill="#dcdcdc"/><path d="M11.300 7v7.200" stroke="#dcdcdc" stroke-width="2.400" stroke-linecap="round"/><path d="M8.400 1v3.300a2.900 2.900 0 0 0 5.800 0v-3.300" fill="none" stroke="#dcdcdc" stroke-width="1.800"/><circle cx="11.300" cy="13.700" r=".7" fill="#2c2c2c"/></svg>
<div class="a" style="left:2.3px;top:69.7px;width:26.0px;height:26.6px;background:#2c2c2c;border-radius:4px 0 0 4px;"></div>
<svg style="left:7.0px;top:75.0px" width="16" height="16"><rect x="1" y="5" width="14" height="9.500" rx="1" fill="none" stroke="#dcdcdc" stroke-width="1.300"/><path d="M4 5v-2.500h5v2.500" fill="none" stroke="#dcdcdc" stroke-width="1.300"/><rect x="3" y="7.500" width="6" height="4.500" fill="#dcdcdc"/><path d="M11 7.500h2.500M11 9.800h2.500M11 12h2.500" stroke="#dcdcdc" stroke-width="1"/></svg>
<div class="a" style="left:2.3px;top:97.5px;width:26.0px;height:26.3px;background:#2c2c2c;border-radius:4px 0 0 4px;"></div>
<svg style="left:7.0px;top:102.6px" width="16" height="16"><path d="M2 1.500h12v5.500h-12z" fill="#dcdcdc"/><path d="M1 7h14v3.500h-2.500v-1.500h-9v1.500h-2.500z" fill="#dcdcdc"/><rect x="4" y="9.500" width="8" height="6" fill="none" stroke="#dcdcdc" stroke-width="1.100"/><path d="M5 14.500l2-3 1.500 2 1-1 1.500 2z" fill="#dcdcdc"/></svg>
<div class="a" style="left:2.3px;top:125.0px;width:26.0px;height:27.0px;background:#2c2c2c;border-radius:4px 0 0 4px;"></div>
<svg style="left:7.0px;top:130.5px" width="16" height="16"><path d="M1.500 4.500v10h10M3.500 2.500v10h10" fill="none" stroke="#dcdcdc" stroke-width="1"/><rect x="5.500" y=".8" width="9.700" height="9.700" fill="#dcdcdc"/><path d="M6.500 9.500l3.200-4.800 2.400 3.200.9-.9 1.500 2.500z" fill="#2c2c2c"/><circle cx="12.800" cy="3.500" r="1.100" fill="#2c2c2c"/></svg>
<div class="a" style="left:2.3px;top:153.3px;width:26.0px;height:26.7px;background:#2c2c2c;border-radius:4px 0 0 4px;"></div>
<svg style="left:7.0px;top:158.6px" width="16" height="16"><path d="M5 1.500l4 11h-8z" fill="#dcdcdc"/><circle cx="11.500" cy="4" r="2" fill="#dcdcdc"/><circle cx="10.500" cy="11" r="3.300" fill="#2c2c2c" stroke="#dcdcdc" stroke-width="1.200"/><path d="M8.500 10a2.500 2.500 0 0 1 3-1.500" stroke="#dcdcdc" stroke-width=".9" fill="none"/></svg>
<div class="a" style="left:2.3px;top:181.5px;width:26.0px;height:27.5px;background:#2c2c2c;border-radius:4px 0 0 4px;"></div>
<svg style="left:7.0px;top:187.2px" width="16" height="16"><circle cx="8" cy="8" r="6.500" fill="none" stroke="#e05f6e" stroke-width="1.400"/><path d="M3.500 4c2 0 3 1.500 2 3s1 2 2.500 2.500s0 3.500-1.500 4.500M10 2.500c-1 1.500 0 3 1.500 3s2 1.500 2.500 2" fill="none" stroke="#e05f6e" stroke-width="1.500"/></svg>
<div class="a" style="left:2.3px;top:218.0px;width:26.0px;height:27.3px;background:#2c2c2c;border-radius:4px 0 0 4px;"></div>
<svg style="left:7.0px;top:223.2px" width="16" height="16"><rect x="4" y="4" width="8.500" height="8.500" fill="#e8934a"/><path d="M1 4.500v-3.500h3.500M12 1h3.500v3.500M15.500 12v3.500h-3.500M4.500 15.500h-3.500v-3.500" fill="none" stroke="#e8934a" stroke-width="1.100"/></svg>
<div class="a" style="left:2.3px;top:246.5px;width:26.0px;height:27.0px;background:#2c2c2c;border-radius:4px 0 0 4px;"></div>
<svg style="left:7.0px;top:250.8px" width="16" height="16"><path d="M13.500 2.500a4 4 0 0 0-5.500 5l-6 6a1.500 1.500 0 0 0 2.300 2.300l6-6a4 4 0 0 0 5-5.500l-2.500 2.500-2-2z" fill="#6a9ee8"/></svg>
<div class="a" style="left:2.3px;top:275.0px;width:26.0px;height:27.0px;background:#2c2c2c;border-radius:4px 0 0 4px;"></div>
<svg style="left:7.0px;top:279.0px" width="16" height="16"><path d="M12.500 4.500a6 6 0 1 0 1.500 5.500" fill="none" stroke="#6a9ee8" stroke-width="1.400"/><circle cx="7.500" cy="8.500" r="2.200" fill="#6a9ee8"/><circle cx="13" cy="3.500" r="1.500" fill="#6a9ee8"/></svg>
<div class="a" style="left:2.3px;top:303.5px;width:26.0px;height:26.5px;background:#2c2c2c;border-radius:4px 0 0 4px;"></div>
<svg style="left:7.0px;top:307.0px" width="16" height="16"><path d="M9.500 2.500l4 4-4 7.500a4 4 0 1 1-7-3.500z" fill="none" stroke="#6a9ee8" stroke-width="1.400" stroke-linejoin="round" transform="rotate(12 8 8)"/><circle cx="6.500" cy="10" r="2.500" fill="none" stroke="#6a9ee8" stroke-width="1.400"/><circle cx="6.500" cy="10" r=".9" fill="#6a9ee8"/></svg>
<div class="a" style="left:2.3px;top:331.3px;width:26.0px;height:24.5px;background:#424242;border-radius:4px 0 0 4px;"></div>
<svg style="left:7.0px;top:334.8px" width="16" height="16"><path d="M9 3.500c4.500 0 5.500 2.500 5.500 5c0 3.500-3.500 4.500-9 4.500" fill="none" stroke="#1fc8a4" stroke-width="1.300"/><rect x="6" y="2" width="3" height="3" fill="#424242" stroke="#1fc8a4" stroke-width="1.100"/><rect x="2" y="11.500" width="3" height="3" fill="#424242" stroke="#1fc8a4" stroke-width="1.100"/></svg>
<div class="a" style="left:2.3px;top:357.0px;width:26.0px;height:27.0px;background:#2c2c2c;border-radius:4px 0 0 4px;"></div>
<svg style="left:7.0px;top:362.8px" width="16" height="16"><circle cx="8" cy="8" r="6.800" fill="#e05f6e"/><path d="M8 8v-6.800a6.800 6.800 0 0 1 6.800 6.800zM8 8v6.800a6.800 6.800 0 0 1-6.800-6.800z" fill="#2c2c2c"/></svg>
<svg style="left:39.2px;top:36.3px" width="14" height="14"><rect x="3.300" y="3.300" width="7.400" height="7.400" fill="#e6e6e6"/><path d="M.6 3.500v-2.900h2.900M10.500 .6h2.900v2.900M13.400 10.500v2.900h-2.900M3.500 13.400h-2.900v-2.900" fill="none" stroke="#e6e6e6" stroke-width="1.100"/></svg>
<div class="t" style="top:36.3px;font-size:10.5px;letter-spacing:-0.21px;line-height:14px;left:62.2px;color:#d8d8d8;">BezierCircle</div>
<svg style="left:134.5px;top:40.5px" width="5" height="6"><path d="M.5 0l3.500 3-3.500 3z" fill="#5c5c5c"/></svg>
<svg style="left:154.0px;top:36.5px" width="14" height="14"><path d="M7 2.500c4.500 0 5.500 2.500 5.500 4.800c0 3.200-3.300 4.200-8.500 4.200" fill="none" stroke="#e0e0e0" stroke-width="1.200"/><rect x="4.300" y="1" width="2.800" height="2.800" fill="#424242" stroke="#e0e0e0" stroke-width="1"/><rect x=".7" y="10.200" width="2.800" height="2.800" fill="#424242" stroke="#e0e0e0" stroke-width="1"/></svg>
<div class="t" style="top:36.3px;font-size:10.5px;letter-spacing:-0.16px;line-height:14px;left:177.1px;color:#d8d8d8;">BezierCircle.001</div>
<svg style="left:307.0px;top:35.5px" width="15" height="16"><path d="M8.500 1.500l5 5-1.500.5-2.500 2.500.3 3-1.800.5-6-6 .5-1.800 3 .3 2.500-2.500z" fill="none" stroke="#b0b0b0" stroke-width="1.100" stroke-linejoin="round"/><path d="M4.500 10.500l-3.500 4" stroke="#b0b0b0" stroke-width="1.200"/></svg>
<div class="a" style="left:37.0px;top:70.0px;width:30.0px;height:18.3px;background:#2b2b2b;border-radius:3px 0 0 3px;box-shadow:0 0 0 1px #3a3a3a;"></div>
<svg style="left:40.0px;top:72.0px" width="14" height="14"><path d="M7 2.500c4.500 0 5.500 2.500 5.500 4.800c0 3.200-3.300 4.200-8.500 4.200" fill="none" stroke="#e0e0e0" stroke-width="1.200"/><rect x="4.300" y="1" width="2.800" height="2.800" fill="#2b2b2b" stroke="#e0e0e0" stroke-width="1"/><rect x=".7" y="10.200" width="2.800" height="2.800" fill="#2b2b2b" stroke="#e0e0e0" stroke-width="1"/></svg>
<svg style="left:57.5px;top:77.0px" width="8" height="6"><path d="M.5 .7l3.5 3.3l3.5 -3.3" fill="none" stroke="#e0e0e0" stroke-width="1.3"/></svg>
<div class="a" style="left:67.6px;top:70.0px;width:235.4px;height:18.3px;background:#1d1d1d;box-shadow:0 0 0 1px #3a3a3a;"></div>
<div class="t" style="top:71.8px;font-size:10.5px;letter-spacing:-0.18px;line-height:14px;left:75.4px;color:#e6e6e6;">BezierCircle.001</div>
<div class="a" style="left:303.6px;top:70.0px;width:19.6px;height:18.3px;background:#545454;border-radius:0 3px 3px 0;"></div>
<svg style="left:306.5px;top:72.3px" width="14" height="14"><path d="M7 1c2 1 3.500 1.500 5.500 1.500c0 5-1.500 8.500-5.500 10.500c-4-2-5.500-5.500-5.500-10.500c2 0 3.500-.5 5.500-1.500z" fill="none" stroke="#bdbdbd" stroke-width="1.200"/></svg>
<div class="a" style="left:28.2px;top:120.4px;width:302.8px;height:266.6px;background:#383838;"></div>
<svg style="left:37.3px;top:106.0px" width="7" height="6"><path d="M0 0h6.400l-3.200 5.800z" fill="#b4b4b4"/></svg>
<div class="t" style="top:102.7px;font-size:11.5px;letter-spacing:-0.26px;line-height:14px;left:50.2px;color:#dedede;">Shape</div>
<svg style="left:312.5px;top:107.0px" width="12" height="5"><path d="M.5 1h1.200M3.700 1h1.200M6.900 1h1.200M10.100 1h1.200M.5 3.700h1.200M3.700 3.700h1.200M6.900 3.700h1.200M10.100 3.700h1.200" stroke="#9a9a9a" stroke-width="1.200"/></svg>
<div class="a" style="left:37.0px;top:130.2px;width:142.0px;height:18.0px;background:#5279b8;border-radius:3px 0 0 3px;"></div>
<div class="a" style="left:179.6px;top:130.2px;width:143.6px;height:18.0px;background:#585858;border-radius:0 3px 3px 0;"></div>
<div class="t" style="top:132.3px;font-size:10.5px;letter-spacing:-0.13px;line-height:14px;left:100.5px;color:#fff;">2D</div>
<div class="t" style="top:132.3px;font-size:10.5px;letter-spacing:-0.13px;line-height:14px;left:243.5px;color:#e6e6e6;">3D</div>
<div class="a" style="left:143.8px;top:155.0px;width:159.9px;height:18.3px;background:#585858;border-radius:3px;"></div>
<div class="t" style="top:157.4px;font-size:10.5px;letter-spacing:-0.37px;line-height:14px;left:41.3px;color:#d8d8d8;">Resolution Previe...</div>
<div class="t" style="top:157.4px;font-size:10.5px;letter-spacing:-0.18px;line-height:14px;left:217.2px;color:#e6e6e6;">12</div>
<div class="a" style="left:143.8px;top:176.3px;width:159.9px;height:18.4px;background:#585858;border-radius:3px;"></div>
<div class="t" style="top:178.8px;font-size:10.5px;letter-spacing:-0.36px;line-height:14px;left:88.8px;color:#d8d8d8;">Render U</div>
<div class="t" style="top:178.8px;font-size:10.5px;letter-spacing:-0.18px;line-height:14px;left:220.5px;color:#e6e6e6;">0</div>
<div class="a" style="left:311.8px;top:183.6px;width:4.0px;height:4.0px;background:#cdcdcd;border-radius:2px;"></div>
<div class="a" style="left:143.8px;top:207.0px;width:159.9px;height:18.3px;background:#2b2b2b;border-radius:3px;box-shadow:0 0 0 1px #3d3d3d;"></div>
<div class="t" style="top:209.4px;font-size:10.5px;letter-spacing:-0.17px;line-height:14px;left:67.8px;color:#d8d8d8;">Twist Method</div>
<div class="t" style="top:209.4px;font-size:10.5px;letter-spacing:-0.19px;line-height:14px;left:151.3px;color:#e6e6e6;">Minimum</div>
<svg style="left:293.0px;top:214.1px" width="8" height="6"><path d="M.5 .7l3.5 3.3l3.5 -3.3" fill="none" stroke="#e0e0e0" stroke-width="1.3"/></svg>
<div class="a" style="left:311.8px;top:214.2px;width:4.0px;height:4.0px;background:#cdcdcd;border-radius:2px;"></div>
<div class="a" style="left:143.8px;top:229.0px;width:159.9px;height:18.3px;background:#585858;border-radius:3px;"></div>
<div class="t" style="top:231.4px;font-size:10.5px;letter-spacing:-0.45px;line-height:14px;left:96.5px;color:#d8d8d8;">Smooth</div>
<div class="t" style="top:231.4px;font-size:10.5px;letter-spacing:-0.09px;line-height:14px;left:212.2px;color:#e6e6e6;">0.00</div>
<div class="a" style="left:311.8px;top:236.2px;width:4.0px;height:4.0px;background:#cdcdcd;border-radius:2px;"></div>
<div class="a" style="left:143.8px;top:261.3px;width:159.9px;height:18.4px;background:#2b2b2b;border-radius:3px;box-shadow:0 0 0 1px #3d3d3d;"></div>
<div class="t" style="top:263.8px;font-size:10.5px;letter-spacing:-0.11px;line-height:14px;left:89.3px;color:#d8d8d8;">Fill Mode</div>
<div class="t" style="top:263.8px;font-size:10.5px;letter-spacing:-0.11px;line-height:14px;left:151.3px;color:#e6e6e6;">Front</div>
<svg style="left:293.0px;top:268.5px" width="8" height="6"><path d="M.5 .7l3.5 3.3l3.5 -3.3" fill="none" stroke="#e0e0e0" stroke-width="1.3"/></svg>
<div class="a" style="left:311.8px;top:268.6px;width:4.0px;height:4.0px;background:#cdcdcd;border-radius:2px;"></div>
<div class="a" style="left:144.0px;top:286.6px;width:11.7px;height:12.0px;background:#5279b8;border-radius:2.5px;"></div>
<svg style="left:144.0px;top:286.6px" width="12" height="12"><path d="M2 5.800l3 3 5-6" fill="none" stroke="#fff" stroke-width="1.900"/></svg>
<div class="t" style="top:285.8px;font-size:10.5px;letter-spacing:-0.16px;line-height:14px;left:159.5px;color:#e6e6e6;">Fill Deformed</div>
<div class="a" style="left:311.8px;top:290.6px;width:4.0px;height:4.0px;background:#cdcdcd;border-radius:2px;"></div>
<div class="a" style="left:144.0px;top:320.0px;width:11.7px;height:12.0px;background:#5279b8;border-radius:2.5px;"></div>
<svg style="left:144.0px;top:320.0px" width="12" height="12"><path d="M2 5.800l3 3 5-6" fill="none" stroke="#fff" stroke-width="1.900"/></svg>
<div class="t" style="top:319.2px;font-size:10.5px;letter-spacing:-0.32px;line-height:14px;left:159.5px;color:#e6e6e6;">Radius</div>
<div class="a" style="left:311.8px;top:324.0px;width:4.0px;height:4.0px;background:#cdcdcd;border-radius:2px;"></div>
<div class="a" style="left:144.0px;top:342.0px;width:11.7px;height:12.0px;background:#5a5a5a;border-radius:2.5px;"></div>
<div class="t" style="top:341.2px;font-size:10.5px;letter-spacing:-0.27px;line-height:14px;left:159.5px;color:#e6e6e6;">Stretch</div>
<div class="a" style="left:311.8px;top:346.0px;width:4.0px;height:4.0px;background:#cdcdcd;border-radius:2px;"></div>
<div class="a" style="left:144.0px;top:364.0px;width:11.7px;height:12.0px;background:#5a5a5a;border-radius:2.5px;"></div>
<div class="t" style="top:363.2px;font-size:10.5px;letter-spacing:-0.42px;line-height:14px;left:159.5px;color:#e6e6e6;">Bounds Clamp</div>
<div class="a" style="left:311.8px;top:368.0px;width:4.0px;height:4.0px;background:#cdcdcd;border-radius:2px;"></div>
<svg style="left:37.8px;top:397.2px" width="6" height="8"><path d="M0 0l5.800 3.400-5.800 3.400z" fill="#a8a8a8"/></svg>
<div class="t" style="top:393.9px;font-size:11.5px;letter-spacing:-0.14px;line-height:14px;left:50.2px;color:#dedede;">Texture Space</div>
<svg style="left:312.5px;top:398.2px" width="12" height="5"><path d="M.5 1h1.200M3.700 1h1.200M6.900 1h1.200M10.100 1h1.200M.5 3.700h1.200M3.700 3.700h1.200M6.900 3.700h1.200M10.100 3.700h1.200" stroke="#9a9a9a" stroke-width="1.200"/></svg>
<svg style="left:37.8px;top:420.9px" width="6" height="8"><path d="M0 0l5.800 3.400-5.800 3.400z" fill="#a8a8a8"/></svg>
<div class="t" style="top:417.6px;font-size:11.5px;letter-spacing:-0.21px;line-height:14px;left:50.2px;color:#dedede;">Geometry</div>
<svg style="left:312.5px;top:421.9px" width="12" height="5"><path d="M.5 1h1.200M3.700 1h1.200M6.900 1h1.200M10.100 1h1.200M.5 3.700h1.200M3.700 3.700h1.200M6.900 3.700h1.200M10.100 3.700h1.200" stroke="#9a9a9a" stroke-width="1.200"/></svg>
<svg style="left:37.8px;top:444.9px" width="6" height="8"><path d="M0 0l5.800 3.400-5.800 3.400z" fill="#a8a8a8"/></svg>
<div class="a" style="left:49.3px;top:442.6px;width:11.7px;height:12.0px;background:#5279b8;border-radius:2.5px;"></div>
<svg style="left:49.3px;top:442.6px" width="12" height="12"><path d="M2 5.800l3 3 5-6" fill="none" stroke="#fff" stroke-width="1.900"/></svg>
<div class="t" style="top:441.6px;font-size:11.5px;letter-spacing:-0.18px;line-height:14px;left:65.4px;color:#dedede;">Path Animation</div>
<svg style="left:312.5px;top:445.9px" width="12" height="5"><path d="M.5 1h1.200M3.700 1h1.200M6.900 1h1.200M10.100 1h1.200M.5 3.700h1.200M3.700 3.700h1.200M6.900 3.700h1.200M10.100 3.700h1.200" stroke="#9a9a9a" stroke-width="1.200"/></svg>
<svg style="left:37.8px;top:468.8px" width="6" height="8"><path d="M0 0l5.800 3.400-5.800 3.400z" fill="#a8a8a8"/></svg>
<div class="t" style="top:465.5px;font-size:11.5px;letter-spacing:-0.20px;line-height:14px;left:50.2px;color:#dedede;">Active Spline</div>
<svg style="left:312.5px;top:469.8px" width="12" height="5"><path d="M.5 1h1.200M3.700 1h1.200M6.900 1h1.200M10.100 1h1.200M.5 3.700h1.200M3.700 3.700h1.200M6.900 3.700h1.200M10.100 3.700h1.200" stroke="#9a9a9a" stroke-width="1.200"/></svg>
<svg style="left:37.3px;top:493.5px" width="7" height="6"><path d="M0 0h6.400l-3.200 5.800z" fill="#b4b4b4"/></svg>
<div class="t" style="top:489.5px;font-size:11.5px;letter-spacing:-0.17px;line-height:14px;left:50.2px;color:#dedede;">Shape Keys</div>
<svg style="left:312.5px;top:493.8px" width="12" height="5"><path d="M.5 1h1.200M3.700 1h1.200M6.900 1h1.200M10.100 1h1.200M.5 3.700h1.200M3.700 3.700h1.200M6.900 3.700h1.200M10.100 3.700h1.200" stroke="#9a9a9a" stroke-width="1.200"/></svg>
<div class="a" style="left:28.2px;top:508.0px;width:302.8px;height:95.0px;background:#383838;"></div>
<div class="a" style="left:36.7px;top:516.3px;width:259.1px;height:79.4px;background:#2d2d2d;border-radius:3px;box-shadow:0 0 0 1px #474747;"></div>
<svg style="left:48.0px;top:582.0px" width="6" height="7"><path d="M0 0l5.500 3-5.500 3z" fill="#b0b0b0"/></svg>
<svg style="left:169.5px;top:583.0px" width="12" height="5"><path d="M.5 1h1.200M3.700 1h1.200M6.900 1h1.200M10.100 1h1.200M.5 3.700h1.200M3.700 3.700h1.200M6.900 3.700h1.200M10.100 3.700h1.200" stroke="#9a9a9a" stroke-width="1.200"/></svg>
<div class="a" style="left:305.3px;top:517.6px;width:17.9px;height:17.4px;background:#545454;border-radius:3px 3px 0 0;"></div>
<div class="a" style="left:305.3px;top:535.6px;width:17.9px;height:19.1px;background:#545454;border-radius:0 0 3px 3px;"></div>
<svg style="left:309.5px;top:521.5px" width="10" height="10"><path d="M5 .5v9M.5 5h9" stroke="#888" stroke-width="1.100"/></svg>
<svg style="left:309.5px;top:540.5px" width="10" height="10"><path d="M.5 5h9" stroke="#888" stroke-width="1.100"/></svg>
<div class="a" style="left:305.3px;top:563.2px;width:17.9px;height:18.3px;background:#2b2b2b;border-radius:3px;box-shadow:0 0 0 1px #444;"></div>
<svg style="left:310.2px;top:570.0px" width="9" height="6"><path d="M.5 .7l4.0 3.8l4.0 -3.8" fill="none" stroke="#e0e0e0" stroke-width="1.3"/></svg>
<svg style="left:37.8px;top:613.0px" width="6" height="8"><path d="M0 0l5.800 3.400-5.800 3.400z" fill="#a8a8a8"/></svg>
<div class="t" style="top:609.7px;font-size:11.5px;letter-spacing:-0.24px;line-height:14px;left:50.2px;color:#dedede;">Custom Properties</div>
<svg style="left:312.5px;top:614.0px" width="12" height="5"><path d="M.5 1h1.200M3.700 1h1.200M6.900 1h1.200M10.100 1h1.200M.5 3.700h1.200M3.700 3.700h1.200M6.900 3.700h1.200M10.100 3.700h1.200" stroke="#9a9a9a" stroke-width="1.200"/></svg>
</div>
<div class="a" style="left:0;top:1019.500px;width:1920px;height:20.500px;background:#2c2c2c">
<svg style="left:11.3px;top:2.8px" width="13" height="16"><rect x="1.200" y="1" width="10" height="13.500" rx="3.800" fill="none" stroke="#d8d8d8" stroke-width="1.200"/><path d="M1.800 1.600h4.300v5.400h-4.300z" fill="#d8d8d8"/></svg>
<div class="t" style="top:2.9px;font-size:10.5px;letter-spacing:-0.23px;line-height:14px;left:34.0px;color:#c4c4c4;">Select</div>
<svg style="left:75.5px;top:2.8px" width="13" height="16"><rect x="1.200" y="1" width="10" height="13.500" rx="3.800" fill="none" stroke="#d8d8d8" stroke-width="1.200"/><path d="M1.800 1.600h4.300v5.400h-4.300z" fill="#d8d8d8"/></svg>
<svg style="left:87.5px;top:2.5px" width="6" height="8"><path d="M1.500 1v6M4 1.500v4" stroke="#d8d8d8" stroke-width="1"/></svg>
<div class="t" style="top:2.9px;font-size:10.5px;letter-spacing:-0.25px;line-height:14px;left:100.0px;color:#c4c4c4;">Box Select</div>
<svg style="left:247.3px;top:2.8px" width="13" height="16"><rect x="1.200" y="1" width="10" height="13.500" rx="3.800" fill="none" stroke="#d8d8d8" stroke-width="1.200"/><rect x="4.700" y="2.500" width="3" height="5" rx="1.300" fill="#d8d8d8"/></svg>
<div class="t" style="top:2.9px;font-size:10.5px;letter-spacing:-0.24px;line-height:14px;left:270.0px;color:#c4c4c4;">Rotate View</div>
<svg style="left:483.5px;top:2.8px" width="13" height="16"><rect x="1.200" y="1" width="10" height="13.500" rx="3.800" fill="none" stroke="#d8d8d8" stroke-width="1.200"/><path d="M6.300 1.600h4.300v5.400h-4.300z" fill="#d8d8d8"/></svg>
<div class="t" style="top:2.9px;font-size:10.5px;letter-spacing:-0.35px;line-height:14px;left:506.0px;color:#c4c4c4;">Curve Context Menu</div>
<div class="t" style="top:3.0px;font-size:10.5px;letter-spacing:-0.13px;line-height:14px;left:1871.7px;color:#a8a8a8;">2.91.0</div>
</div>
<div class="a win" style="left:0;top:1040px;width:1920px;height:40px;background:#dcdcdc;color:#111">
<svg style="left:15.6px;top:11.6px" width="17" height="17" viewBox="0 0 16.700 17"><path d="M0 2.300l7-1v6.700h-7zM8 1.200l8.700-1.200v8h-8.700zM0 9h7v6.700l-7-1zM8 9h8.700v8l-8.700-1.200z" fill="#0a0a0a"/></svg>
<div class="a" style="left:49.0px;top:1.2px;width:341.8px;height:37.6px;background:#fff;box-shadow:0 0 0 1px #cfcfcf;"></div>
<svg style="left:60.0px;top:12.0px" width="17" height="17"><circle cx="10.300" cy="6.200" r="5" fill="none" stroke="#111" stroke-width="1.300"/><path d="M6.800 9.800l-6 6.200" stroke="#111" stroke-width="1.400"/></svg>
<div class="t" style="top:10.5px;font-size:15px;letter-spacing:-0.26px;line-height:20px;left:88.5px;color:#1a1a1a;font-family:'Liberation Sans',sans-serif;">Escribe aquí para buscar</div>
<svg style="left:406.0px;top:11.0px" width="20" height="20"><circle cx="9.600" cy="9.400" r="7" fill="none" stroke="#0a0a0a" stroke-width="1.900"/></svg>
<svg style="left:455.0px;top:11.0px" width="18" height="18"><rect x="2.500" y="4.500" width="9" height="8" fill="none" stroke="#0a0a0a" stroke-width="1.300"/><path d="M1.500 2h11M1.500 15h11M14.500 1.500v4M14.500 9v6.500" stroke="#0a0a0a" stroke-width="1.300"/><rect x="13.500" y="6" width="2.200" height="2.200" fill="#0a0a0a"/></svg>
<svg style="left:502.8px;top:8.0px" width="34" height="30"><path d="M0 9.500l12.200-9 12.200 9z" fill="#0f5fb8"/><path d="M2.500 8.500h19.500l-9.700 7z" fill="#fff"/><path d="M0 9.500l12.200 8.500 12.200-8.500v13h-24.400z" fill="#2aa3ec"/><path d="M0 22.500l10-8 2.200 1.500 2.200-1.500 10 8z" fill="#1b8fe0"/><circle cx="24.800" cy="19.300" r="7.300" fill="#b8cfe0" stroke="#666" stroke-width="1"/><text x="24.800" y="23.300" font-family="Liberation Sans, sans-serif" font-size="11" text-anchor="middle" fill="#111">1</text></svg>
<svg style="left:552.0px;top:7.0px" width="24" height="26"><path d="M7.500 6v-2.500a2 2 0 0 1 2-2h4a2 2 0 0 1 2 2v2.500" fill="none" stroke="#2a2a2a" stroke-width="1.700"/><path d="M0 6h23v18.500h-23z" fill="#2d2d2d"/><rect x="7" y="11" width="4" height="4" fill="#f25022"/><rect x="12" y="11" width="4" height="4" fill="#7fba00"/><rect x="7" y="16" width="4" height="4" fill="#00a4ef"/><rect x="12" y="16" width="4" height="4" fill="#ffb900"/></svg>
<svg style="left:601.0px;top:8.0px" width="25" height="24"><circle cx="13.500" cy="12" r="11.500" fill="#ed6c47"/><path d="M13.500 .5a11.500 11.500 0 0 1 11.500 11.500h-11.500z" fill="#ff8f6b"/><path d="M13.500 12h11.500a11.500 11.500 0 0 1-11.500 11.500z" fill="#d35230"/><rect x="0" y="5.500" width="13" height="13" rx="1.200" fill="#c43e1c"/><text x="6.500" y="16" font-family="Liberation Sans, sans-serif" font-size="10.500" font-weight="bold" text-anchor="middle" fill="#fff">P</text></svg>
<svg style="left:650.0px;top:8.2px" width="24" height="24"><rect width="24" height="24" fill="#000"/><path d="M7.500 4h3l3 9.500v-9.500h3v16h-3l-3-9.500v9.500h-3z" fill="#e50914"/></svg>
<svg style="left:698.8px;top:8.0px" width="25" height="25"><defs><linearGradient id="eg" x1="0" y1="0" x2="1" y2="1"><stop offset="0" stop-color="#35c1f1"/><stop offset=".6" stop-color="#1680d0"/><stop offset="1" stop-color="#0c59a4"/></linearGradient><linearGradient id="eg2" x1="0" y1="1" x2="1" y2="0"><stop offset="0" stop-color="#2aa6e0"/><stop offset="1" stop-color="#6bdc5a"/></linearGradient></defs><path d="M12.200 0a12.200 12.200 0 0 1 12.200 11c0 4-3 6-6 6c-3 0-4-1.500-3.500-3c.6-1.200.6-3-1-4.500c-2.500-2-7-1-9 2c-2 3-1 8 3 11a12.200 12.200 0 0 1-8-11.500a12.200 12.200 0 0 1 12.300-11z" fill="url(#eg2)"/><path d="M.9 12c0-4 4-7.500 9.500-7.500c5 0 8 3 8 6c0 2-1.500 3-2 3.500c1 1 3.500 1.500 6 .5c-1 6-6 10-11 10c-6 0-10.500-5-10.500-12.500z" fill="url(#eg)"/><path d="M9 12.500c0 5 3 9 8.500 10.500a12 12 0 0 1-9 .5c-4-2.500-5-7.500-3-11c1-1.500 3-2.500 4.500-2.500c-.6.800-1 1.500-1 2.500z" fill="#0d5ca8"/></svg>
<svg style="left:747.8px;top:8.0px" width="24" height="24"><rect width="24" height="24" fill="#0078d7"/><path d="M12 4.500a7.300 7.300 0 0 1 0 14.600a7.300 7.300 0 0 1-3.600-1l-3.900 1.100 1.100-3.800a7.300 7.300 0 0 1 6.400-10.900z" fill="#fff"/><circle cx="12" cy="11.800" r="6" fill="#2fc351"/><path d="M9.300 8.800c.8-.8 1.200-.4 1.600.8c.3.800-.4 1-.2 1.500c.5 1 1.400 1.800 2.400 2.300c.5.200.7-.6 1.300-.3c1.200.6 1.700.8 1 1.700c-1 1.300-3.300.5-5-1.200c-1.600-1.600-2.200-3.700-1.100-4.800z" fill="#fff"/></svg>
<svg style="left:797.9px;top:8.0px" width="23" height="24"><rect x="0" y="1.500" width="22.200" height="21.500" rx="2" fill="#1a9be8"/><rect x="0" y="1.500" width="22.200" height="5.500" rx="2" fill="#0f6fc4"/><path d="M5 0v4.500M17.200 0v4.500" stroke="#4fc3f7" stroke-width="1.800"/><g fill="#fff"><rect x="8.600" y="9.700" width="2.400" height="2.400"/><rect x="12.600" y="9.700" width="2.400" height="2.400"/><rect x="16.600" y="9.700" width="2.400" height="2.400"/><rect x="4.600" y="13.700" width="2.400" height="2.400"/><rect x="8.600" y="13.700" width="2.400" height="2.400"/><rect x="12.600" y="13.700" width="2.400" height="2.400"/><rect x="16.600" y="13.700" width="2.400" height="2.400"/><rect x="4.600" y="17.700" width="2.400" height="2.400"/><rect x="8.600" y="17.700" width="2.400" height="2.400"/><rect x="12.600" y="17.700" width="2.400" height="2.400"/></g></svg>
<svg style="left:846.5px;top:8.6px" width="23" height="23"><circle cx="11.400" cy="11.400" r="11.300" fill="#dd4b3e"/><path d="M11.400 11.400L1.600 5.700a11.300 11.300 0 0 0 4.900 15.900z" fill="#1aa260"/><path d="M11.400 11.400l-4.900 10.200a11.300 11.300 0 0 0 5.900 1.100l5-8.500z" fill="#1aa260"/><path d="M11.400 11.400h11.200a11.300 11.300 0 0 1-10.200 11.300l5-8.500z" fill="#ffce44"/><path d="M22.200 8h-10.800l6 6.200-5 8.500a11.300 11.300 0 0 0 9.800-14.700z" fill="#ffce44"/><circle cx="11.400" cy="11.400" r="5.200" fill="#fff"/><circle cx="11.400" cy="11.400" r="4.100" fill="#4c8bf5"/></svg>
<svg style="left:896.0px;top:11.0px" width="22" height="18"><path d="M0 1.500a1 1 0 0 1 1-1h6.500l2 2h11a1 1 0 0 1 1 1v13.500h-21.500z" fill="#e8a91a"/><path d="M0 4.500h21.500v12.500a1 1 0 0 1-1 1h-19.500a1 1 0 0 1-1-1z" fill="#ffd970"/><path d="M4.500 11h12.500v7h-3.500v-3.500h-5.500v3.500h-3.500z" fill="#2f8fe0"/></svg>
<div class="a" style="left:887.1px;top:38.2px;width:39.8px;height:1.8px;background:#0c6fd0;"></div>
<svg style="left:945.3px;top:8.8px" width="22" height="21"><rect x=".6" y=".6" width="20.200" height="19.500" fill="#0d1b33" stroke="#35c5f4" stroke-width="1.300"/><text x="10.700" y="15" font-family="Liberation Sans, sans-serif" font-size="11.500" text-anchor="middle" fill="#35c5f4">Ps</text></svg>
<svg style="left:992.5px;top:8.5px" width="25" height="23"><rect x="6.500" y="1" width="18" height="5.500" fill="#41a5ee"/><rect x="6.500" y="6.500" width="18" height="5.300" fill="#2b7cd3"/><rect x="6.500" y="11.800" width="18" height="5.300" fill="#185abd"/><rect x="6.500" y="17.100" width="18" height="5" fill="#103f91"/><rect x="0" y="5.500" width="13" height="12.500" rx="1.200" fill="#185abd"/><text x="6.500" y="15.800" font-family="Liberation Sans, sans-serif" font-size="10" font-weight="bold" text-anchor="middle" fill="#fff">W</text></svg>
<svg style="left:1041.5px;top:10.0px" width="25" height="21" viewBox="0 0 17.500 15"><path d="M1.200 11.200 L8.200 5.600 L4.600 5.600 Q3.600 5.600 3.600 4.800 Q3.600 4 4.600 4 L9.900 4 L7.900 2.400 Q7.300 1.700 7.900 1.200 Q8.500 .8 9.200 1.300 L15 5.900 Q16.900 7.600 16.600 9.900 Q16 13.600 11.600 14.200 Q7.800 14.400 6.200 11.600 L5.600 10.200 L2.400 12.700 Q1.600 13.200 1.100 12.500 Q.7 11.800 1.200 11.200Z" fill="#ea7600"/><ellipse cx="11" cy="9.100" rx="3.500" ry="3.200" fill="#fff"/><ellipse cx="11" cy="9.100" rx="2" ry="1.900" fill="#265787"/></svg>
<div class="a" style="left:1033.8px;top:38.2px;width:40.2px;height:1.8px;background:#0c6fd0;"></div>
<svg style="left:1670.0px;top:15.0px" width="15" height="10"><path d="M1.300 8l6-6 6 6" fill="none" stroke="#111" stroke-width="1.300"/></svg>
<svg style="left:1692.5px;top:13.5px" width="18" height="12"><path d="M4.500 11a3.600 3.600 0 0 1-.6-7.100a5 5 0 0 1 9.300-.3a3.800 3.800 0 0 1-.2 7.400z" fill="#c8c8c8" stroke="#222" stroke-width="1.100"/><path d="M2 8l6-3 8 4" fill="none" stroke="#777" stroke-width="1"/></svg>
<svg style="left:1719.5px;top:14.5px" width="15" height="14"><path d="M1 11.500a11.500 11.500 0 0 1 11.500-10.500M4 12a8 8 0 0 1 8.300-7.500M7 12.300a5 5 0 0 1 5.300-4.500" fill="none" stroke="#111" stroke-width="1.200"/><circle cx="10.800" cy="11.600" r="1.400" fill="#111"/></svg>
<svg style="left:1740.5px;top:13.5px" width="18" height="15"><path d="M1 5h3l4-3.500v11.500l-4-3.500h-3z" fill="none" stroke="#111" stroke-width="1.200"/><path d="M10.500 5a3.500 3.500 0 0 1 0 4.500M12.500 3a6 6 0 0 1 0 8.500M14.700 1a9 9 0 0 1 0 12.500" fill="none" stroke="#111" stroke-width="1.100"/></svg>
<div class="t" style="top:11.8px;font-size:11px;letter-spacing:0.00px;line-height:16px;left:1769.5px;color:#111;transform:scaleX(0.800);transform-origin:0 50%;">ESP</div>
<div class="t" style="top:2.7px;font-size:11.5px;letter-spacing:0.00px;line-height:16px;left:1821.9px;color:#111;transform:scaleX(0.898);transform-origin:0 50%;">1:15</div>
<div class="t" style="top:20.7px;font-size:11.5px;letter-spacing:0.00px;line-height:16px;left:1804.3px;color:#111;transform:scaleX(0.985);transform-origin:0 50%;">17/12/2020</div>
<svg style="left:1879.0px;top:12.0px" width="24" height="24"><path d="M.3 .3h15.700v11h-8l-3.500 3v-3h-4.200z" fill="#0a0a0a"/><path d="M3 3.500h10.500M3 6h10.500M3 8.500h10.500" stroke="#dcdcdc" stroke-width="1"/><circle cx="15.700" cy="15.600" r="7.300" fill="#d4d4d4" stroke="#555" stroke-width="1"/><text x="15.700" y="19.800" font-family="Liberation Sans, sans-serif" font-size="11.500" text-anchor="middle" fill="#111">3</text></svg>
<div class="a" style="left:1915.5px;top:0.0px;width:0.8px;height:40.0px;background:#9a9a9a;"></div>
</div>
</body></html>
